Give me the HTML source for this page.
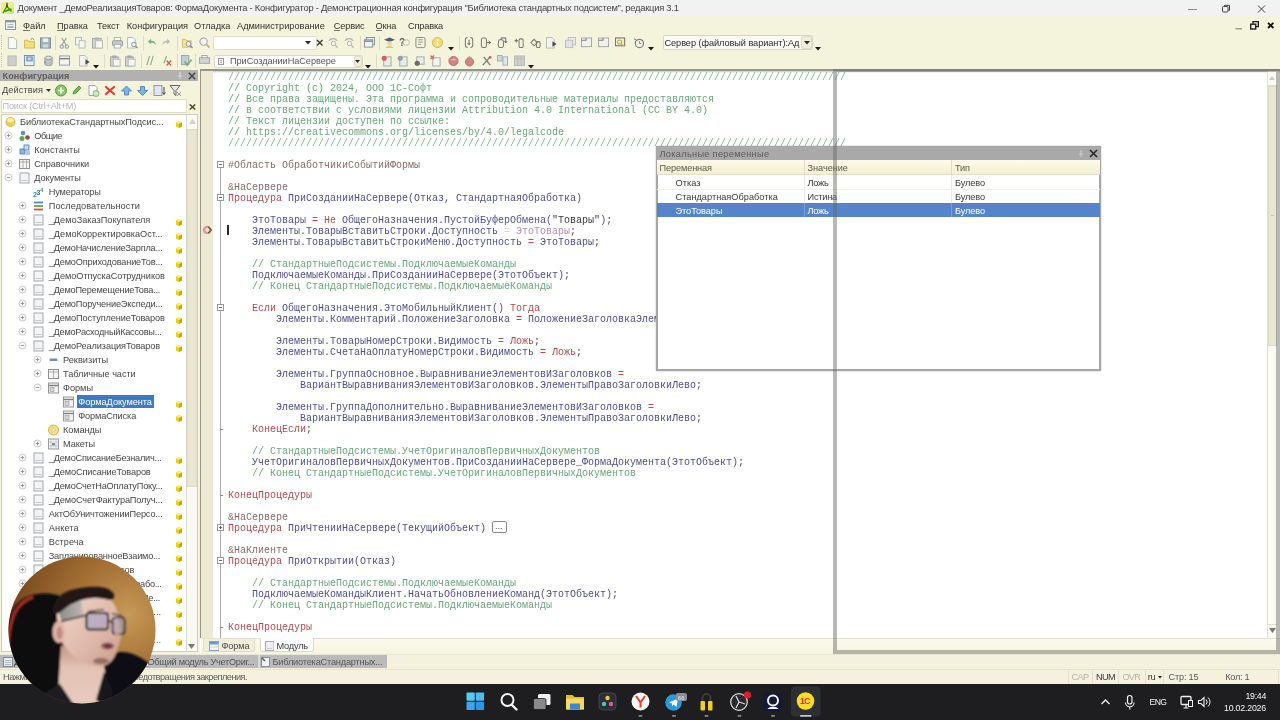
<!DOCTYPE html><html lang="ru"><head><meta charset="utf-8"><title>Конфигуратор</title><style>
*{box-sizing:border-box;margin:0;padding:0}
html,body{width:1280px;height:720px;overflow:hidden}
body{position:relative;background:#f4f3dc;font-family:"Liberation Sans",sans-serif;font-size:11px;color:#222}
.a{position:absolute}
.t{position:absolute;white-space:pre;line-height:14px;height:14px}
.code{position:absolute;left:228px;top:71.750px;font-family:"Liberation Mono",monospace;font-size:10px;line-height:11px;white-space:pre;color:#50508e}
.code i{font-style:normal}
.c{color:#6aa87a}.k{color:#b04c50}.p{color:#866e68}.s{color:#3a3a3a}.o{color:#c04a44}.q{color:#54485c}.c2{color:#86b892}
</style></head><body><div class="a" style="left:0;top:0;width:1280px;height:720px;will-change:transform;filter:blur(.4px)">
<div class="a" style="left:0px;top:0px;width:1280px;height:16px;background:linear-gradient(#f0f3f3,#f4f1f1)"></div>
<svg class="a" style="left:1px;top:2.200px" width="13" height="12" viewBox="0 0 13 12"><defs><linearGradient id="apg" x1="0" y1="0" x2="1" y2="1"><stop offset="0" stop-color="#f8e88a"/><stop offset=".55" stop-color="#eaf08c"/><stop offset="1" stop-color="#b4ec84"/></linearGradient></defs><rect x="0" y="0" width="13" height="12" rx="1.500" fill="url(#apg)"/><path d="M6 .8v4" stroke="#4a3a1a" stroke-width="1.300"/><path d="M6 4L2 11.200M6 4.500L10.500 9.500" stroke="#4a9a1e" stroke-width="1.500" fill="none"/><path d="M3.500 9.500L10.500 7" stroke="#3e8e1c" stroke-width="1.600"/><circle cx="6" cy="4.200" r="1.100" fill="#3a4a1a"/></svg>
<span class="t" style="left:17.5px;top:1.1999999999999993px;font-size:9.4px;letter-spacing:-0.253px;color:#454545">Документ _ДемоРеализацияТоваров: ФормаДокумента - Конфигуратор - Демонстрационная конфигурация &quot;Библиотека стандартных подсистем&quot;, редакция 3.1</span>
<svg class="a" style="left:1185px;top:4px" width="90" height="10" viewBox="0 0 90 10"><path d="M3 5.500h9" stroke="#8a8a8a" stroke-width="1"/><rect x="37.500" y="2.500" width="5.500" height="5.500" rx="1" fill="none" stroke="#444" stroke-width="1"/><path d="M39.500 2.500v-1.200h5v5h-1.200" fill="none" stroke="#444" stroke-width="1"/><path d="M73 1.500l7 7M80 1.500l-7 7" stroke="#444" stroke-width="1"/></svg>
<svg class="a" style="left:5px;top:20px" width="11" height="10" viewBox="0 0 11 10"><rect x=".5" y=".5" width="10" height="9" fill="#eef2f4" stroke="#8e989e" stroke-width="1"/><rect x=".5" y=".5" width="10" height="1.800" fill="#8a949c"/><path d="M2.500 4.500h6" stroke="#b4bcc2" stroke-width="1"/><rect x="2.500" y="6" width="6" height="2" fill="#a8b2ba"/></svg>
<span class="t" style="left:23px;top:18.5px;font-size:9.2px;letter-spacing:0.033px;color:#333">Файл</span>
<div class="a" style="left:23px;top:30px;width:6.5px;height:1px;background:#7a7a6a"></div>
<span class="t" style="left:57px;top:18.5px;font-size:9.2px;letter-spacing:-0.013px;color:#333">Правка</span>
<div class="a" style="left:57px;top:30px;width:6.5px;height:1px;background:#7a7a6a"></div>
<span class="t" style="left:97px;top:18.5px;font-size:9.2px;letter-spacing:-0.132px;color:#333">Текст</span>
<span class="t" style="left:126.75px;top:18.5px;font-size:9.2px;letter-spacing:-0.041px;color:#333">Конфигурация</span>
<span class="t" style="left:194px;top:18.5px;font-size:9.2px;letter-spacing:0.019px;color:#333">Отладка</span>
<span class="t" style="left:237px;top:18.5px;font-size:9.2px;letter-spacing:0.016px;color:#333">Администрирование</span>
<span class="t" style="left:333.75px;top:18.5px;font-size:9.2px;letter-spacing:-0.126px;color:#333">Сервис</span>
<div class="a" style="left:333.75px;top:30px;width:6.5px;height:1px;background:#7a7a6a"></div>
<span class="t" style="left:375.5px;top:18.5px;font-size:9.2px;letter-spacing:-0.157px;color:#333">Окна</span>
<div class="a" style="left:375.5px;top:30px;width:6.5px;height:1px;background:#7a7a6a"></div>
<span class="t" style="left:408px;top:18.5px;font-size:9.2px;letter-spacing:-0.156px;color:#333">Справка</span>
<svg class="a" style="left:1232px;top:19px" width="46" height="13" viewBox="0 0 46 13"><path d="M3.500 9.800h6.500" stroke="#8a8a80" stroke-width="1.200"/><rect x="18.700" y="5.200" width="5" height="4.800" fill="none" stroke="#222" stroke-width="1.400"/><path d="M21 4.800v-2.200h5.300v5h-2.400" fill="none" stroke="#222" stroke-width="1.400"/><path d="M36 3.800l5.400 5.200M41.400 3.800l-5.400 5.200" stroke="#111" stroke-width="1.800"/></svg>
<div class="a" style="left:1px;top:35px;width:2px;height:14px;border-left:1px dotted #c4c2ae"></div>
<div class="a" style="left:1px;top:53px;width:2px;height:14px;border-left:1px dotted #c4c2ae"></div>
<svg class="a" style="left:6.5px;top:36.5px;opacity:.8" width="11" height="12" viewBox="0 0 12 13"><path d="M1.500 .5h6l3 3v9h-9z" fill="#fcfcfc" stroke="#9aa4b0" stroke-width="1"/></svg>
<svg class="a" style="left:23.5px;top:36.5px;opacity:.8" width="11" height="12" viewBox="0 0 12 13"><path d="M.5 3.500h4l1 1.500h6v7h-11z" fill="#f4d86a" stroke="#c8a63a" stroke-width="1"/><path d="M7 3.500l2-2.500 2 2.500" fill="none" stroke="#5a9a3a" stroke-width="1"/></svg>
<svg class="a" style="left:40.0px;top:36.5px;opacity:.8" width="11" height="12" viewBox="0 0 12 13"><rect x=".5" y="1" width="11" height="11" fill="#8aa0b8" stroke="#5a708a" stroke-width="1"/><rect x="3" y="1.500" width="6" height="4" fill="#e8eef4"/><rect x="3" y="8" width="6" height="3.500" fill="#c8d2dc"/></svg>
<svg class="a" style="left:59.0px;top:36.5px;opacity:.8" width="11" height="12" viewBox="0 0 12 13"><path d="M3 1l5 8M8 1l-5 8" stroke="#7a8694" stroke-width="1.200"/><circle cx="3" cy="10.500" r="1.800" fill="none" stroke="#7a8694" stroke-width="1.100"/><circle cx="8.500" cy="10.500" r="1.800" fill="none" stroke="#7a8694" stroke-width="1.100"/></svg>
<svg class="a" style="left:75.0px;top:36.5px;opacity:.8" width="11" height="12" viewBox="0 0 12 13"><rect x=".5" y=".5" width="6.500" height="8" fill="#f4f4f4" stroke="#a0a8b0" stroke-width="1"/><rect x="4.500" y="4" width="6.500" height="8" fill="#f8f8f8" stroke="#a0a8b0" stroke-width="1"/></svg>
<svg class="a" style="left:91.5px;top:36.5px;opacity:.8" width="11" height="12" viewBox="0 0 12 13"><rect x=".5" y="1.500" width="9.500" height="10.500" fill="#c8ccd2" stroke="#8a929c" stroke-width="1"/><rect x="4" y="4" width="7.500" height="8" fill="#fafafa" stroke="#a0a8b0" stroke-width="1"/><rect x="3" y=".5" width="4.500" height="2.500" fill="#9aa2ac"/></svg>
<svg class="a" style="left:111.5px;top:36.5px;opacity:.8" width="11" height="12" viewBox="0 0 12 13"><rect x="2.500" y=".5" width="7" height="4" fill="#fafafa" stroke="#9aa2ac" stroke-width="1"/><rect x=".5" y="4" width="11" height="5.500" rx="1" fill="#b8bec6" stroke="#7a848e" stroke-width="1"/><rect x="2.500" y="8" width="7" height="4" fill="#fafafa" stroke="#9aa2ac" stroke-width="1"/></svg>
<svg class="a" style="left:126.5px;top:36.5px;opacity:.8" width="11" height="12" viewBox="0 0 12 13"><path d="M.5 .5h6l2.500 2.500v9h-8.500z" fill="#fcfcfc" stroke="#9aa4b0" stroke-width="1"/><circle cx="7.500" cy="8" r="2.500" fill="#e4eef8" stroke="#6a7a8a" stroke-width="1"/><path d="M9.500 10l2 2" stroke="#6a7a8a" stroke-width="1.400"/></svg>
<svg class="a" style="left:147.0px;top:36.5px;opacity:.8" width="11" height="12" viewBox="0 0 12 13"><path d="M1 5l3.500-3v2c3 0 5 1.500 5 5-1.500-2.500-3-3-5-3v2z" fill="#5a9a5a"/></svg>
<svg class="a" style="left:162.0px;top:36.5px;opacity:.8" width="11" height="12" viewBox="0 0 12 13"><path d="M9 5l-3.500-3v2c-3 0-5 1.500-5 5 1.500-2.500 3-3 5-3v2z" fill="#a8aeb4"/></svg>
<svg class="a" style="left:181.5px;top:36.5px;opacity:.8" width="11" height="12" viewBox="0 0 12 13"><path d="M.5 2.500h3.500l1 1.500h5v7h-9.500z" fill="#f4e08a" stroke="#c8aa4a" stroke-width="1"/><circle cx="7" cy="7.500" r="2.600" fill="#eef4fa" stroke="#6a7684" stroke-width="1"/><path d="M9 9.500l2.500 2.500" stroke="#6a7684" stroke-width="1.500"/></svg>
<svg class="a" style="left:199.0px;top:36.5px;opacity:.8" width="11" height="12" viewBox="0 0 12 13"><circle cx="5" cy="5" r="4" fill="#f4f6f8" stroke="#8a949e" stroke-width="1.200"/><path d="M8 8l3.500 3.500" stroke="#c8a04a" stroke-width="1.800"/></svg>
<svg class="a" style="left:327.5px;top:36.5px;opacity:.8" width="11" height="12" viewBox="0 0 12 13"><path d="M1 4c2-3 7-3 9 0" fill="none" stroke="#9aa2ac" stroke-width="1.200"/><circle cx="6" cy="7" r="2.500" fill="#f4f4f4" stroke="#9aa2ac" stroke-width="1"/><path d="M8 9l2.500 2.500" stroke="#9aa2ac" stroke-width="1.300"/></svg>
<svg class="a" style="left:344.0px;top:36.5px;opacity:.8" width="11" height="12" viewBox="0 0 12 13"><path d="M1 4c2-3 7-3 9 0" fill="none" stroke="#9aa2ac" stroke-width="1.200"/><circle cx="6" cy="7" r="2.500" fill="#f4f4f4" stroke="#9aa2ac" stroke-width="1"/><path d="M8 9l2.500 2.500" stroke="#9aa2ac" stroke-width="1.300"/></svg>
<svg class="a" style="left:363.5px;top:36.5px;opacity:.8" width="11" height="12" viewBox="0 0 12 13"><rect x="2.500" y=".5" width="9" height="8" fill="#e8ecf2" stroke="#6a7684" stroke-width="1"/><rect x=".5" y="3" width="9" height="8" fill="#f4f6f8" stroke="#6a7684" stroke-width="1"/><path d="M.5 4.500h9" stroke="#4a6a9a" stroke-width="1.500"/></svg>
<svg class="a" style="left:383.5px;top:36.5px;opacity:.8" width="11" height="12" viewBox="0 0 12 13"><path d="M0 3l6-2.500 6 2.500-6 2.500z" fill="#2a3a5a"/><circle cx="6" cy="7" r="2.500" fill="#f0c8a0"/><path d="M2 12c0-3 8-3 8 0z" fill="#e8b83a"/></svg>
<svg class="a" style="left:398.5px;top:36.5px;opacity:.8" width="11" height="12" viewBox="0 0 12 13"><text x="0" y="10" font-family="Liberation Sans" font-weight="bold" font-size="11" fill="#3a3a3a">?</text><ellipse cx="8" cy="6" rx="3.500" ry="3" fill="#f4f4e8" stroke="#9a9a8a" stroke-width=".8"/></svg>
<svg class="a" style="left:414.5px;top:36.5px;opacity:.8" width="11" height="12" viewBox="0 0 12 13"><rect x="1" y=".5" width="10" height="11" rx="1.500" fill="#f4f2e4" stroke="#6a6a5a" stroke-width="1"/><path d="M3.500 3h5M3.500 5.500h5M3.500 8h3" stroke="#7a7a6a" stroke-width="1"/></svg>
<svg class="a" style="left:431.5px;top:36.5px;opacity:.8" width="11" height="12" viewBox="0 0 12 13"><circle cx="6" cy="6" r="5.500" fill="#f4d25a" stroke="#c8a030" stroke-width="1"/><circle cx="6" cy="3.200" r="1" fill="#fff"/><rect x="5.200" y="5" width="1.600" height="4.500" fill="#fff"/></svg>
<svg class="a" style="left:464.0px;top:36.5px;opacity:.8" width="11" height="12" viewBox="0 0 12 13"><path d="M4 .5c-2 0-2.500 1-2.500 2.500v6c0 1.500.5 2.500 2.500 2.500M7 .5c2 0 2.500 1 2.500 2.500v6c0 1.500-.5 2.500-2.500 2.500" fill="none" stroke="#5a5a5a" stroke-width="1.100"/><path d="M5.500 3v5M4 6.500l1.500 2 1.500-2" fill="none" stroke="#3a3a3a" stroke-width="1"/></svg>
<svg class="a" style="left:480.0px;top:36.5px;opacity:.8" width="11" height="12" viewBox="0 0 12 13"><rect x="1.500" y="1" width="5.500" height="10.500" rx="2" fill="none" stroke="#5a5a5a" stroke-width="1.100"/><path d="M7.500 6h4M9.500 4l2 2-2 2" fill="none" stroke="#3a3a3a" stroke-width="1"/></svg>
<svg class="a" style="left:496.5px;top:36.5px;opacity:.8" width="11" height="12" viewBox="0 0 12 13"><rect x="1.500" y="3" width="5.500" height="8.500" rx="2" fill="none" stroke="#5a5a5a" stroke-width="1.100"/><path d="M4.500 3v-2h5v5M8 4.500l1.500 2 1.500-2" fill="none" stroke="#3a3a3a" stroke-width="1"/></svg>
<svg class="a" style="left:513.5px;top:36.5px;opacity:.8" width="11" height="12" viewBox="0 0 12 13"><rect x="5.500" y="2" width="4.500" height="9.500" rx="1.500" fill="none" stroke="#5a5a5a" stroke-width="1.100"/><path d="M.5 4h4M2.500 2v4" stroke="#3a3a3a" stroke-width="1"/></svg>
<svg class="a" style="left:529.5px;top:36.5px;opacity:.8" width="11" height="12" viewBox="0 0 12 13"><path d="M1 6l3.500-3.500 3.500 3.500-3.500 3.500z" fill="none" stroke="#5a5a5a" stroke-width="1.100"/><rect x="7" y="5" width="4" height="6.500" rx="1.500" fill="none" stroke="#5a5a5a" stroke-width="1.100"/></svg>
<svg class="a" style="left:546.0px;top:36.5px;opacity:.8" width="11" height="12" viewBox="0 0 12 13"><path d="M.5 .5h6l2.500 2.500v9h-8.500z" fill="#f4f4f4" stroke="#a0a8b0" stroke-width="1"/><path d="M7 4.500l4.500 3-4.500 3z" fill="#222"/></svg>
<svg class="a" style="left:564.5px;top:36.5px;opacity:.8" width="11" height="12" viewBox="0 0 12 13"><rect x="3.500" y=".5" width="8" height="8" fill="#e8eaee" stroke="#a8b0b8" stroke-width="1"/><rect x=".5" y="3.500" width="8" height="8" fill="#dcdfe4" stroke="#a8b0b8" stroke-width="1"/></svg>
<svg class="a" style="left:581.0px;top:36.5px;opacity:.8" width="11" height="12" viewBox="0 0 12 13"><rect x=".5" y="1" width="11" height="9.500" fill="#f0f2f4" stroke="#8a929c" stroke-width="1"/><path d="M.5 3.500h5v-2.500" fill="none" stroke="#5a646e" stroke-width="1.200"/></svg>
<svg class="a" style="left:598.0px;top:36.5px;opacity:.8" width="11" height="12" viewBox="0 0 12 13"><rect x=".5" y="1" width="11" height="9.500" fill="#f0f2f4" stroke="#8a929c" stroke-width="1"/><path d="M.5 3.500h5v-2.500" fill="none" stroke="#5a646e" stroke-width="1.200"/></svg>
<svg class="a" style="left:614.5px;top:36.5px;opacity:.8" width="11" height="12" viewBox="0 0 12 13"><rect x=".5" y="1" width="10" height="8.500" fill="#ecece4" stroke="#5a5a4a" stroke-width="1.200"/><circle cx="5" cy="5.500" r="2.200" fill="none" stroke="#c8a43a" stroke-width="1.400"/><path d="M6.500 7l4 3.500" stroke="#c8a43a" stroke-width="1.600"/></svg>
<svg class="a" style="left:632.5px;top:36.5px;opacity:.8" width="11" height="12" viewBox="0 0 12 13"><circle cx="7" cy="7" r="4.500" fill="none" stroke="#5a646e" stroke-width="1.300"/><path d="M7 4.500v2.500h2" stroke="#5a646e" stroke-width="1" fill="none"/><path d="M1 2l2.500 1" stroke="#5a646e" stroke-width="1"/></svg>
<div class="a" style="left:55px;top:35.5px;width:1px;height:14px;background:#dcdac6"></div>
<div class="a" style="left:106.5px;top:35.5px;width:1px;height:14px;background:#dcdac6"></div>
<div class="a" style="left:143px;top:35.5px;width:1px;height:14px;background:#dcdac6"></div>
<div class="a" style="left:176.5px;top:35.5px;width:1px;height:14px;background:#dcdac6"></div>
<div class="a" style="left:359.5px;top:35.5px;width:1px;height:14px;background:#dcdac6"></div>
<div class="a" style="left:379px;top:35.5px;width:1px;height:14px;background:#dcdac6"></div>
<div class="a" style="left:458.5px;top:35.5px;width:1px;height:14px;background:#dcdac6"></div>
<svg class="a" style="left:448px;top:46.5px" width="6" height="4" viewBox="0 0 6 4"><path d="M0 0h6L3 3.500z" fill="#1a1a1a"/></svg>
<svg class="a" style="left:648px;top:46.5px" width="6" height="4" viewBox="0 0 6 4"><path d="M0 0h6L3 3.500z" fill="#1a1a1a"/></svg>
<svg class="a" style="left:814.5px;top:46.5px" width="6" height="4" viewBox="0 0 6 4"><path d="M0 0h6L3 3.500z" fill="#1a1a1a"/></svg>
<div class="a" style="left:212.5px;top:35.5px;width:104px;height:14px;background:#fff;border:1px solid #e0deca;border-radius:2px"></div>
<svg class="a" style="left:305px;top:41px" width="6" height="4" viewBox="0 0 6 4"><path d="M0 0h6L3 3.500z" fill="#2a2a2a"/></svg>
<svg class="a" style="left:315.5px;top:39px" width="8" height="8" viewBox="0 0 8 8"><path d="M1 1l5.500 5.500M6.500 1l-5.500 5.500" stroke="#3a3a3a" stroke-width="1.400"/></svg>
<div class="a" style="left:662.5px;top:35px;width:150px;height:14.5px;background:#fbfbf6;border:1px solid #d8d6c2;border-radius:2px"></div>
<span class="t" style="left:664.5px;top:35.5px;font-size:9.2px;letter-spacing:-0.065px;color:#2a2a2a">Сервер (файловый вариант):Ад</span>
<div class="a" style="left:801px;top:36px;width:10.5px;height:12.5px;background:#f0eed8;border:1px solid #dedcc8;border-radius:2px"></div>
<svg class="a" style="left:803.5px;top:41px" width="6" height="4" viewBox="0 0 6 4"><path d="M0 0h6L3 3.500z" fill="#2a2a2a"/></svg>
<svg class="a" style="left:6.5px;top:54.5px;opacity:.8" width="11" height="12" viewBox="0 0 12 13"><rect x="1" y="1" width="9" height="10.500" fill="#c4c6c8" stroke="#a8aaac" stroke-width="1"/></svg>
<svg class="a" style="left:24.0px;top:54.5px;opacity:.8" width="11" height="12" viewBox="0 0 12 13"><rect x=".5" y=".5" width="10.500" height="11" fill="#e4eef8" stroke="#4a7ab0" stroke-width="1"/><rect x="3" y="2" width="6" height="4.500" fill="#7aa4d0" stroke="#3a6aa0" stroke-width=".8"/><path d="M4.500 3l3 2.500M7.500 3l-3 2.500" stroke="#fff" stroke-width=".8"/></svg>
<svg class="a" style="left:42.5px;top:54.5px;opacity:.8" width="11" height="12" viewBox="0 0 12 13"><path d="M2 3v7c0 2 8 2 8 0v-7" fill="#b0b8c0" stroke="#7a848e" stroke-width="1"/><ellipse cx="6" cy="3" rx="4" ry="1.800" fill="#d4dae0" stroke="#7a848e" stroke-width="1"/><path d="M.5 8l3-2v4z" fill="#8a949e"/></svg>
<svg class="a" style="left:59.0px;top:54.5px;opacity:.8" width="11" height="12" viewBox="0 0 12 13"><rect x=".5" y="1" width="11" height="10" fill="#f4f4f4" stroke="#7a848e" stroke-width="1"/><path d="M.5 4h11" stroke="#5a646e" stroke-width="1.500"/></svg>
<svg class="a" style="left:78.5px;top:54.5px;opacity:.8" width="11" height="12" viewBox="0 0 12 13"><path d="M.5 .5h6l2.500 2.500v9h-8.500z" fill="#f4f4f4" stroke="#a0a8b0" stroke-width="1"/><path d="M7 4.500l4.500 3-4.500 3z" fill="#222"/></svg>
<svg class="a" style="left:109.5px;top:54.5px;opacity:.8" width="11" height="12" viewBox="0 0 12 13"><rect x=".5" y="2" width="8.500" height="10" fill="#c8ccd2" stroke="#8a929c" stroke-width="1"/><rect x="3.500" y="4.500" width="7.500" height="7.500" fill="#f8f8f8" stroke="#a0a8b0" stroke-width="1"/><rect x="2.500" y=".5" width="4.500" height="2.500" fill="#8a929c"/></svg>
<svg class="a" style="left:125.0px;top:54.5px;opacity:.8" width="11" height="12" viewBox="0 0 12 13"><rect x=".5" y="2" width="8.500" height="10" fill="#c8ccd2" stroke="#8a929c" stroke-width="1"/><rect x="3.500" y="4.500" width="7.500" height="7.500" fill="#f8f8f8" stroke="#a0a8b0" stroke-width="1"/><rect x="2.500" y=".5" width="4.500" height="2.500" fill="#8a929c"/></svg>
<svg class="a" style="left:144.5px;top:54.5px;opacity:.8" width="11" height="12" viewBox="0 0 12 13"><path d="M2 11l3-10M6 11l3-10" stroke="#6aa06a" stroke-width="1.200"/></svg>
<svg class="a" style="left:162.0px;top:54.5px;opacity:.8" width="11" height="12" viewBox="0 0 12 13"><path d="M2 9l3-8" stroke="#6aa06a" stroke-width="1.200"/><path d="M5 6l5 5.500M10 6l-5 5.500" stroke="#c83a3a" stroke-width="1.500"/></svg>
<svg class="a" style="left:180.5px;top:54.5px;opacity:.8" width="11" height="12" viewBox="0 0 12 13"><rect x=".5" y=".5" width="8" height="10" fill="#b0c6d4" stroke="#7a94a8" stroke-width="1"/><path d="M4 7l2.500 4 5-6" fill="none" stroke="#5a9a4a" stroke-width="1.800"/></svg>
<svg class="a" style="left:199.0px;top:54.5px;opacity:.8" width="11" height="12" viewBox="0 0 12 13"><rect x=".5" y="3" width="11" height="6" fill="#c8ccd0" stroke="#8a9098" stroke-width="1"/><path d="M3 3v-2.500h6v2.500" fill="none" stroke="#8a9098" stroke-width="1"/></svg>
<svg class="a" style="left:381.0px;top:54.5px;opacity:.8" width="11" height="12" viewBox="0 0 12 13"><rect x="3" y="2" width="8" height="10" fill="#e8eaec" stroke="#8a929c" stroke-width="1"/><circle cx="3.500" cy="3.500" r="2.800" fill="#c83a3a"/></svg>
<svg class="a" style="left:396.5px;top:54.5px;opacity:.8" width="11" height="12" viewBox="0 0 12 13"><rect x="3" y="2" width="8" height="10" fill="#e8eaec" stroke="#8a929c" stroke-width="1"/><circle cx="3.500" cy="3.500" r="2.800" fill="#7a8a9a"/></svg>
<svg class="a" style="left:414.0px;top:54.5px;opacity:.8" width="11" height="12" viewBox="0 0 12 13"><rect x="3" y="2" width="8" height="8" fill="#e8eaec" stroke="#8a929c" stroke-width="1"/><circle cx="3.500" cy="9" r="2.800" fill="#4a4a4a"/></svg>
<svg class="a" style="left:430.0px;top:54.5px;opacity:.8" width="11" height="12" viewBox="0 0 12 13"><rect x="3" y="3" width="8" height="9" fill="#f4f4f4" stroke="#8a929c" stroke-width="1"/><path d="M.5 .5l4 4M4.500 .5l-4 4" stroke="#c83a3a" stroke-width="1.400"/></svg>
<svg class="a" style="left:447.5px;top:54.5px;opacity:.8" width="11" height="12" viewBox="0 0 12 13"><circle cx="6" cy="6.500" r="5" fill="#c86a6a" stroke="#a84a4a" stroke-width="1"/><path d="M3.500 5h5" stroke="#e8b0b0" stroke-width="1.200"/></svg>
<svg class="a" style="left:464.0px;top:54.5px;opacity:.8" width="11" height="12" viewBox="0 0 12 13"><circle cx="6" cy="7.500" r="4.500" fill="#c86a6a" stroke="#a84a4a" stroke-width="1"/><path d="M3.500 3.500l2.500-2 2.500 2" fill="#d89090" stroke="#b86060" stroke-width=".8"/></svg>
<svg class="a" style="left:481.0px;top:54.5px;opacity:.8" width="11" height="12" viewBox="0 0 12 13"><path d="M2 11l8-9M3 2l7 9" stroke="#5a6a5e" stroke-width="1.600"/><circle cx="10" cy="2.500" r="1.500" fill="#c83a3a"/></svg>
<svg class="a" style="left:496.5px;top:54.5px;opacity:.8" width="11" height="12" viewBox="0 0 12 13"><rect x=".5" y=".5" width="5" height="6" fill="#c8d4e0" stroke="#8a98a8" stroke-width="1"/><rect x="6.500" y="2" width="5" height="9" fill="#dce4ec" stroke="#8a98a8" stroke-width="1"/></svg>
<svg class="a" style="left:514.0px;top:54.5px;opacity:.8" width="11" height="12" viewBox="0 0 12 13"><rect x=".5" y="1" width="11" height="10.500" fill="#c4c6c8" stroke="#a8aaac" stroke-width="1"/><path d="M.5 4h11M4 1v10.500M8 1v10.500" stroke="#acaeb0" stroke-width="1"/></svg>
<div class="a" style="left:103.5px;top:53.5px;width:1px;height:14px;background:#dcdac6"></div>
<div class="a" style="left:140.5px;top:53.5px;width:1px;height:14px;background:#dcdac6"></div>
<div class="a" style="left:176.5px;top:53.5px;width:1px;height:14px;background:#dcdac6"></div>
<div class="a" style="left:195px;top:53.5px;width:1px;height:14px;background:#dcdac6"></div>
<div class="a" style="left:375.5px;top:53.5px;width:1px;height:14px;background:#dcdac6"></div>
<svg class="a" style="left:93px;top:64.5px" width="6" height="4" viewBox="0 0 6 4"><path d="M0 0h6L3 3.500z" fill="#1a1a1a"/></svg>
<svg class="a" style="left:365px;top:64.5px" width="6" height="4" viewBox="0 0 6 4"><path d="M0 0h6L3 3.500z" fill="#1a1a1a"/></svg>
<svg class="a" style="left:528px;top:64.5px" width="6" height="4" viewBox="0 0 6 4"><path d="M0 0h6L3 3.500z" fill="#1a1a1a"/></svg>
<div class="a" style="left:213.5px;top:54.5px;width:149px;height:13.5px;background:#fff;border:1px solid #dcdac6;border-radius:2px"></div>
<svg class="a" style="left:217.5px;top:57.5px" width="6" height="7" viewBox="0 0 6 7"><rect x=".5" y=".5" width="5" height="6" fill="#f4f4f4" stroke="#9a9a9a" stroke-width="1"/><path d="M2 2.500h2M2 4.500h2" stroke="#c88" stroke-width=".8"/></svg>
<span class="t" style="left:230px;top:54px;font-size:9.2px;letter-spacing:-0.058px;color:#585858">ПриСозданииНаСервере</span>
<div class="a" style="left:353.5px;top:55.5px;width:8.5px;height:11.5px;background:#f0eed8;border:1px solid #dedcc8;border-radius:2px"></div>
<svg class="a" style="left:355px;top:60px" width="5" height="4" viewBox="0 0 5 4"><path d="M0 0h5L2.500 3z" fill="#2a2a2a"/></svg>
<div class="a" style="left:200px;top:70px;width:1080px;height:584px;background:#fff"></div>
<div class="a" style="left:200px;top:68.8px;width:1080px;height:2.2px;background:#96968a"></div>
<div class="a" style="left:200px;top:71px;width:1080px;height:2px;background:linear-gradient(rgba(150,150,138,.55),rgba(150,150,138,0))"></div>
<div class="a" style="left:201px;top:71px;width:12px;height:567px;background:#ecead4"></div>
<div class="code"><i class="c2">///////////////////////////////////////////////////////////////////////////////////////////////////////</i>
<i class="c">// Copyright (c) 2024, ООО 1С-Софт</i>
<i class="c">// Все права защищены. Эта программа и сопроводительные материалы предоставляются</i>
<i class="c">// в соответствии с условиями лицензии Attribution 4.0 International (CC BY 4.0)</i>
<i class="c">// Текст лицензии доступен по ссылке:</i>
<i class="c">// https://creativecommons.org/licenses/by/4.0/legalcode</i>
<i class="c2">///////////////////////////////////////////////////////////////////////////////////////////////////////</i>

<i class="p">#Область ОбработчикиСобытийФормы</i>

<i class="p">&amp;НаСервере</i>
<i class="k">Процедура</i> ПриСозданииНаСервере(Отказ, СтандартнаяОбработка)

    ЭтоТовары <i class="o">=</i> <i class="k">Не</i> ОбщегоНазначения.ПустойБуферОбмена(<i class="s">"Товары"</i>)<i class="q">;</i>
    Элементы.ТоварыВставитьСтроки.Доступность <i style="color:#e6d2d2">=</i> <i style="color:#b88cb0">ЭтоТовары</i><i class="q">;</i>
    Элементы.ТоварыВставитьСтрокиМеню.Доступность <i class="o">=</i> ЭтоТовары<i class="q">;</i>

<i class="c">    // СтандартныеПодсистемы.ПодключаемыеКоманды</i>
    ПодключаемыеКоманды.ПриСозданииНаСервере(ЭтотОбъект)<i class="q">;</i>
<i class="c">    // Конец СтандартныеПодсистемы.ПодключаемыеКоманды</i>

    <i class="k">Если</i> ОбщегоНазначения.ЭтоМобильныйКлиент() <i class="k">Тогда</i>
        Элементы.Комментарий.ПоложениеЗаголовка <i class="o">=</i> ПоложениеЗаголовкаЭлементаФормы.Верх<i class="q">;</i>

        Элементы.ТоварыНомерСтроки.Видимость <i class="o">=</i> <i class="k">Ложь</i><i class="q">;</i>
        Элементы.СчетаНаОплатуНомерСтроки.Видимость <i class="o">=</i> <i class="k">Ложь</i><i class="q">;</i>

        Элементы.ГруппаОсновное.ВыравниваниеЭлементовИЗаголовков <i class="o">=</i>
            ВариантВыравниванияЭлементовИЗаголовков.ЭлементыПравоЗаголовкиЛево<i class="q">;</i>

        Элементы.ГруппаДополнительно.ВыравниваниеЭлементовИЗаголовков <i class="o">=</i>
            ВариантВыравниванияЭлементовИЗаголовков.ЭлементыПравоЗаголовкиЛево<i class="q">;</i>
    <i class="k">КонецЕсли</i><i class="q">;</i>

<i class="c">    // СтандартныеПодсистемы.УчетОригиналовПервичныхДокументов</i>
    УчетОригиналовПервичныхДокументов.ПриСозданииНаСервере_ФормаДокумента(ЭтотОбъект)<i class="q">;</i>
<i class="c">    // Конец СтандартныеПодсистемы.УчетОригиналовПервичныхДокументов</i>

<i class="k">КонецПроцедуры</i>

<i class="p">&amp;НаСервере</i>
<i class="k">Процедура</i> ПриЧтенииНаСервере(ТекущийОбъект)

<i class="p">&amp;НаКлиенте</i>
<i class="k">Процедура</i> ПриОткрытии(Отказ)

<i class="c">    // СтандартныеПодсистемы.ПодключаемыеКоманды</i>
    ПодключаемыеКомандыКлиент.НачатьОбновлениеКоманд(ЭтотОбъект)<i class="q">;</i>
<i class="c">    // Конец СтандартныеПодсистемы.ПодключаемыеКоманды</i>

<i class="k">КонецПроцедуры</i></div>
<div class="a" style="left:219.9px;top:168px;width:1px;height:470px;background:#a8a8a8"></div>
<svg class="a" style="left:216.9px;top:161.0px" width="7" height="7" viewBox="0 0 7 7"><rect x=".5" y=".5" width="6" height="6" fill="#fff" stroke="#9a9a9a" stroke-width="1"/><path d="M2 3.500h3" stroke="#6a6a6a" stroke-width="1"/></svg>
<svg class="a" style="left:216.9px;top:194.0px" width="7" height="7" viewBox="0 0 7 7"><rect x=".5" y=".5" width="6" height="6" fill="#fff" stroke="#9a9a9a" stroke-width="1"/><path d="M2 3.500h3" stroke="#6a6a6a" stroke-width="1"/></svg>
<svg class="a" style="left:216.9px;top:304.0px" width="7" height="7" viewBox="0 0 7 7"><rect x=".5" y=".5" width="6" height="6" fill="#fff" stroke="#9a9a9a" stroke-width="1"/><path d="M2 3.500h3" stroke="#6a6a6a" stroke-width="1"/></svg>
<svg class="a" style="left:216.9px;top:557.0px" width="7" height="7" viewBox="0 0 7 7"><rect x=".5" y=".5" width="6" height="6" fill="#fff" stroke="#9a9a9a" stroke-width="1"/><path d="M2 3.500h3" stroke="#6a6a6a" stroke-width="1"/></svg>
<svg class="a" style="left:216.9px;top:524.0px" width="7" height="7" viewBox="0 0 7 7"><rect x=".5" y=".5" width="6" height="6" fill="#fff" stroke="#9a9a9a" stroke-width="1"/><path d="M2 3.500h3M3.500 2v3" stroke="#6a6a6a" stroke-width="1"/></svg>
<div class="a" style="left:220px;top:428.5px;width:3px;height:1px;background:#8a8a8a"></div>
<div class="a" style="left:220px;top:494.5px;width:3px;height:1px;background:#8a8a8a"></div>
<div class="a" style="left:220px;top:626.5px;width:3px;height:1px;background:#8a8a8a"></div>
<svg class="a" style="left:202.4px;top:225px" width="10" height="10" viewBox="0 0 10 10"><circle cx="5" cy="5" r="4.300" fill="#dc9c9c"/><circle cx="5.300" cy="5" r="2" fill="#fbe0da"/><path d="M6.300 1.800L9.300 5L6.300 8.200" stroke="#6e5436" stroke-width="1.400" fill="none"/></svg>
<div class="a" style="left:227.2px;top:224.5px;width:1.8px;height:10.5px;background:#2a2a2a"></div>
<div class="a" style="left:492px;top:521px;width:14.5px;height:12px;border:1px solid #8a8a8a;border-radius:2px;background:#fff"></div>
<span class="t" style="left:495px;top:519px;font-size:9.2px;letter-spacing:0.000px;color:#444;font-size:9px">...</span>
<div class="a" style="left:1266.5px;top:71px;width:10.5px;height:567px;background:#fbfbf3;border-left:1px solid #e2e0d0"></div>
<div class="a" style="left:1267.5px;top:85.5px;width:9.5px;height:260px;background:#e9e7d1;border:1px solid #dedcc6"></div>
<div class="a" style="left:1270.5px;top:214.5px;width:3px;height:1px;background:#c4c2ae"></div>
<div class="a" style="left:1267px;top:85px;width:10px;height:1px;background:#e0decd"></div>
<svg class="a" style="left:1269px;top:76px" width="6" height="4" viewBox="0 0 6 4"><path d="M0 4h6L3 0z" fill="#c8c8c8"/></svg>
<svg class="a" style="left:1269px;top:628px" width="7" height="5" viewBox="0 0 7 5"><path d="M0 0h7L3.500 5z" fill="#777"/></svg>
<div class="a" style="left:1267px;top:624px;width:10px;height:1px;background:#e0decd"></div>
<div class="a" style="left:201px;top:638px;width:1079px;height:18px;background:linear-gradient(#fbfbee,#f4f3dc)"></div>
<div class="a" style="left:201px;top:638px;width:1079px;height:1px;background:#e4e2d2"></div>
<div class="a" style="left:203px;top:639px;width:52px;height:13px;background:#f1efd9;border:1px solid #dedcc6;border-top:none;border-radius:0 0 3px 3px"></div>
<svg class="a" style="left:208.5px;top:640.5px" width="10.5" height="10" viewBox="0 0 10.5 10"><rect x=".5" y=".5" width="9.500" height="9" fill="#f4f8fc" stroke="#8aa0b8" stroke-width="1"/><rect x="1" y="1" width="8.500" height="2.500" fill="#6a9ad0"/><path d="M1 6h8.500" stroke="#c8d4e0" stroke-width="1"/></svg>
<span class="t" style="left:221.5px;top:639px;font-size:9.2px;letter-spacing:-0.134px;color:#4a4a4a">Форма</span>
<div class="a" style="left:259.5px;top:638px;width:54px;height:14px;background:#fff;border:1px solid #dcdac8;border-top:none;border-radius:0 0 3px 3px"></div>
<svg class="a" style="left:264.5px;top:640.5px" width="9.5" height="10" viewBox="0 0 9.5 10"><rect x=".5" y=".5" width="8.500" height="9" fill="#eef0f2" stroke="#a8aeb4" stroke-width="1"/><path d="M2 7.500h5" stroke="#c8ccd0" stroke-width="1"/></svg>
<span class="t" style="left:276.5px;top:639px;font-size:9.2px;letter-spacing:-0.185px;color:#3a3a3a">Модуль</span>
<div class="a" style="left:655.5px;top:145.5px;width:445.5px;height:225px;background:#fff;border:2px solid #a6a6a6;box-shadow:0 0 1.500px rgba(0,0,0,.3)"></div>
<div class="a" style="left:657px;top:147px;width:442.5px;height:13px;background:#a9a9a9"></div>
<span class="t" style="left:659.5px;top:146.5px;font-size:9.2px;letter-spacing:0.315px;color:#5c5c5c">Локальные переменные</span>
<svg class="a" style="left:1088.5px;top:149px" width="9" height="9" viewBox="0 0 9 9"><path d="M1 1l7 7M8 1l-7 7" stroke="#2a2a2a" stroke-width="1.700"/></svg>
<svg class="a" style="left:1079px;top:150px" width="4" height="7" viewBox="0 0 4 7"><path d="M2 0v7M0 4h4" stroke="#d0d0d0" stroke-width="1"/></svg>
<div class="a" style="left:657px;top:160px;width:442.5px;height:15px;background:linear-gradient(#fdfbea,#f3efd2);border-bottom:1px solid #e4e0c4"></div>
<div class="a" style="left:804px;top:160px;width:1px;height:15px;background:#e0dcc0"></div>
<div class="a" style="left:804px;top:175px;width:1px;height:42px;background:#ecebe0"></div>
<div class="a" style="left:951px;top:160px;width:1px;height:15px;background:#e0dcc0"></div>
<div class="a" style="left:951px;top:175px;width:1px;height:42px;background:#ecebe0"></div>
<span class="t" style="left:659.5px;top:161px;font-size:9.2px;letter-spacing:-0.116px;color:#5a5a4a">Переменная</span>
<span class="t" style="left:807.5px;top:161px;font-size:9.2px;letter-spacing:-0.037px;color:#5a5a4a">Значение</span>
<span class="t" style="left:955px;top:161px;font-size:9.2px;letter-spacing:-0.112px;color:#5a5a4a">Тип</span>
<div class="a" style="left:657px;top:189px;width:442.5px;height:1px;background:#f1f0e6"></div>
<div class="a" style="left:657px;top:203px;width:442.5px;height:14px;background:#5485ca"></div>
<span class="t" style="left:675.5px;top:176px;font-size:9.2px;letter-spacing:0.034px;color:#3a3a3a">Отказ</span>
<span class="t" style="left:807.5px;top:176px;font-size:9.2px;letter-spacing:-0.250px;color:#3a3a3a">Ложь</span>
<span class="t" style="left:955px;top:176px;font-size:9.2px;letter-spacing:-0.103px;color:#3a3a3a">Булево</span>
<span class="t" style="left:675.5px;top:190px;font-size:9.2px;letter-spacing:0.018px;color:#3a3a3a">СтандартнаяОбработка</span>
<span class="t" style="left:807.5px;top:190px;font-size:9.2px;letter-spacing:-0.211px;color:#3a3a3a">Истина</span>
<span class="t" style="left:955px;top:190px;font-size:9.2px;letter-spacing:-0.103px;color:#3a3a3a">Булево</span>
<span class="t" style="left:675.5px;top:204px;font-size:9.2px;letter-spacing:-0.054px;color:#fff">ЭтоТовары</span>
<span class="t" style="left:807.5px;top:204px;font-size:9.2px;letter-spacing:-0.250px;color:#fff">Ложь</span>
<span class="t" style="left:955px;top:204px;font-size:9.2px;letter-spacing:-0.103px;color:#fff">Булево</span>
<div class="a" style="left:804px;top:203px;width:1px;height:14px;background:#769fd8"></div>
<div class="a" style="left:951px;top:203px;width:1px;height:14px;background:#769fd8"></div>
<div class="a" style="left:833px;top:69px;width:443px;height:3px;background:rgba(105,105,105,.47)"></div>
<div class="a" style="left:833px;top:72px;width:4px;height:581.5px;background:rgba(105,105,105,.47)"></div>
<div class="a" style="left:1276px;top:69px;width:4px;height:584.5px;background:rgba(105,105,105,.47)"></div>
<div class="a" style="left:837px;top:650px;width:439px;height:3.5px;background:rgba(105,105,105,.47)"></div>
<div class="a" style="left:0px;top:70px;width:198px;height:11px;background:#b1b1b1"></div>
<span class="t" style="left:2.5px;top:68.5px;font-size:9.2px;letter-spacing:0.022px;font-weight:bold;color:#606060">Конфигурация</span>
<svg class="a" style="left:187.500px;top:71.500px" width="8" height="8" viewBox="0 0 8 8"><path d="M.8 .8L7.200 7.200M7.200 .8L.8 7.200" stroke="#484848" stroke-width="1.600" fill="none"/></svg>
<svg class="a" style="left:177px;top:72px" width="6" height="7" viewBox="0 0 6 7"><path d="M3 0v7M1 4h4" stroke="#ddd" stroke-width="1"/></svg>
<span class="t" style="left:2px;top:83px;font-size:9.2px;letter-spacing:0.086px;color:#4a4a4a">Действия</span>
<svg class="a" style="left:46px;top:89px" width="5" height="3"><path d="M0 0h5L2.5 3z" fill="#333"/></svg>
<svg class="a" style="left:54px;top:83px" width="140" height="15" viewBox="0 0 140 15"><circle cx="7" cy="7.5" r="5.5" fill="#8cc46a" stroke="#5a9a3a" stroke-width="1"/><path d="M4 7.5h6M7 4.5v6" stroke="#fff" stroke-width="1.6"/><path d="M19 11l1-3 5-5 2 2-5 5z" fill="#6fbf4f" stroke="#3d8a2a" stroke-width=".8"/><path d="M35 2.5h6l2 2v8h-8z" fill="#fdfdfd" stroke="#9aa5ad" stroke-width="1"/><circle cx="42" cy="10.5" r="3" fill="#cfe6c0" stroke="#79a860" stroke-width=".8"/><path d="M52 4l8 7M60 4l-8 7" stroke="#d9413a" stroke-width="2.2" stroke-linecap="round"/><path d="M72.500 3l5 5h-3v4h-4v-4h-3z" fill="#79b6e8" stroke="#3f86c8" stroke-width=".9"/><path d="M88.500 12.500l5-5h-3v-4h-4v4h-3z" fill="#79b6e8" stroke="#3f86c8" stroke-width=".9"/><rect x="100" y="2.500" width="8" height="10" fill="#dfe6ee" stroke="#8c99a8" stroke-width="1"/><path d="M110 4v7M108.500 9.500l1.500 2 1.500-2" stroke="#444" stroke-width="1" fill="none"/><path d="M116 2.500h10l-4 5v5l-2-1.500v-3.500z" fill="#e8e8e8" stroke="#666" stroke-width="1"/><path d="M123 9l4 4M127 9l-4 4" stroke="#999" stroke-width="1"/></svg>
<div class="a" style="left:1px;top:99px;width:185.5px;height:14px;background:#fff;border:1px solid #dedcca"></div>
<span class="t" style="left:2.5px;top:98.5px;font-size:9.2px;letter-spacing:-0.216px;color:#b8b8b8">Поиск (Ctrl+Alt+M)</span>
<svg class="a" style="left:188.500px;top:103.500px" width="7" height="6" viewBox="0 0 7 6"><path d="M.8 .5L6.200 5.500M6.200 .5L.8 5.500" stroke="#4a4a22" stroke-width="1.500" fill="none"/></svg>
<div class="a" style="left:1px;top:114px;width:197px;height:538px;background:#fff;border:1px solid #d0ceba"></div>
<div class="a" style="left:185.5px;top:115px;width:11.5px;height:536px;background:#fbfaf2;border-left:1px solid #dddbc8"></div>
<div class="a" style="left:186.5px;top:128.5px;width:10.5px;height:358px;background:#e9e7d1;border:1px solid #dedcc6"></div>
<svg class="a" style="left:188.500px;top:119px" width="7" height="5"><path d="M0 5h7L3.500 0z" fill="#d0d0cc"/></svg>
<svg class="a" style="left:188px;top:644px" width="7" height="5"><path d="M0 0h7L3.5 5z" fill="#777"/></svg>
<svg class="a" style="left:4.5px;top:115.75px" width="11" height="12" viewBox="0 0 11 12"><circle cx="5.500" cy="6" r="4.600" fill="#ecd04a" stroke="#c8a83a" stroke-width=".7"/><ellipse cx="5.500" cy="4.200" rx="3.300" ry="2" fill="#fbf0b0"/></svg>
<span class="t" style="left:20px;top:114.75px;font-size:9.2px;letter-spacing:-0.068px;color:#484848">БиблиотекаСтандартныхПодсис...</span>
<svg class="a" style="left:175px;top:119.75px" width="8" height="9" viewBox="0 0 8 9"><path d="M1 2.500l3-1.500 3 1.500v4l-3 1.500-3-1.500z" fill="#e8cf1e"/><path d="M1 2.500l3 1.500 3-1.500-3-1.500z" fill="#f8ec7a"/><path d="M4 4v4l3-1.500v-4z" fill="#c8a80a"/></svg>
<svg class="a" style="left:4.25px;top:131.25px" width="9" height="9" viewBox="0 0 9 9"><circle cx="4.500" cy="4.500" r="3.500" fill="#fdfdfd" stroke="#c4c4c4" stroke-width=".9"/><path d="M2.700 4.500h3.600M4.500 2.700v3.600" stroke="#8e8e8e" stroke-width=".9"/></svg>
<svg class="a" style="left:18.5px;top:129.75px" width="11" height="12" viewBox="0 0 11 12"><circle cx="4" cy="3" r="2.300" fill="#5a8fd0"/><circle cx="3" cy="8.500" r="2.500" fill="#5aa84a"/><circle cx="8.500" cy="7.500" r="2.300" fill="#8e4e3e"/></svg>
<span class="t" style="left:34.25px;top:128.75px;font-size:9.2px;letter-spacing:-0.500px;color:#484848">Общие</span>
<svg class="a" style="left:4.25px;top:145.25px" width="9" height="9" viewBox="0 0 9 9"><circle cx="4.500" cy="4.500" r="3.500" fill="#fdfdfd" stroke="#c4c4c4" stroke-width=".9"/><path d="M2.700 4.500h3.600M4.500 2.700v3.600" stroke="#8e8e8e" stroke-width=".9"/></svg>
<svg class="a" style="left:18.5px;top:143.75px" width="11" height="12" viewBox="0 0 11 12"><rect x="1" y="5" width="5" height="5" fill="#8fb4e0" stroke="#4a78b4" stroke-width=".8"/><rect x="5" y="1" width="5" height="5" fill="#c4d8f0" stroke="#4a78b4" stroke-width=".8"/><path d="M7 8h4M7 10h4" stroke="#6a8ab4" stroke-width="1"/></svg>
<span class="t" style="left:34.25px;top:142.75px;font-size:9.2px;letter-spacing:0.051px;color:#484848">Константы</span>
<svg class="a" style="left:4.25px;top:159.25px" width="9" height="9" viewBox="0 0 9 9"><circle cx="4.500" cy="4.500" r="3.500" fill="#fdfdfd" stroke="#c4c4c4" stroke-width=".9"/><path d="M2.700 4.500h3.600M4.500 2.700v3.600" stroke="#8e8e8e" stroke-width=".9"/></svg>
<svg class="a" style="left:18.5px;top:157.75px" width="11" height="12" viewBox="0 0 11 12"><rect x=".5" y="1.500" width="10" height="9" fill="#f4f4f4" stroke="#909090" stroke-width="1"/><path d="M4 1.500v9M7.500 1.500v9M.5 4h10" stroke="#a0a0a0" stroke-width=".8"/></svg>
<span class="t" style="left:34.25px;top:156.75px;font-size:9.2px;letter-spacing:-0.067px;color:#484848">Справочники</span>
<svg class="a" style="left:4.25px;top:173.25px" width="9" height="9" viewBox="0 0 9 9"><circle cx="4.500" cy="4.500" r="3.500" fill="#fdfdfd" stroke="#c4c4c4" stroke-width=".9"/><path d="M2.700 4.500h3.600" stroke="#8e8e8e" stroke-width=".9"/></svg>
<svg class="a" style="left:18.5px;top:171.75px" width="11" height="12" viewBox="0 0 11 12"><rect x="1" y="1" width="9" height="10" fill="#f2f4f6" stroke="#a4a9ae" stroke-width="1"/><path d="M2.500 8.500h6" stroke="#c4c8cc" stroke-width="1"/></svg>
<span class="t" style="left:34.25px;top:170.75px;font-size:9.2px;letter-spacing:-0.103px;color:#484848">Документы</span>
<svg class="a" style="left:33px;top:185.75px" width="11" height="12" viewBox="0 0 11 12"><text x="0" y="11" font-size="7" font-family="Liberation Sans" fill="#3a78c0" font-weight="bold">2</text><text x="3.500" y="8.500" font-size="7" font-family="Liberation Sans" fill="#3a78c0" font-weight="bold">3</text><text x="7" y="6" font-size="6" font-family="Liberation Sans" fill="#4a9a4a" font-weight="bold">4</text></svg>
<span class="t" style="left:48.75px;top:184.75px;font-size:9.2px;letter-spacing:-0.157px;color:#484848">Нумераторы</span>
<svg class="a" style="left:18.25px;top:201.25px" width="9" height="9" viewBox="0 0 9 9"><circle cx="4.500" cy="4.500" r="3.500" fill="#fdfdfd" stroke="#c4c4c4" stroke-width=".9"/><path d="M2.700 4.500h3.600M4.500 2.700v3.600" stroke="#8e8e8e" stroke-width=".9"/></svg>
<svg class="a" style="left:33px;top:199.75px" width="11" height="12" viewBox="0 0 11 12"><path d="M1 2.500h9" stroke="#4a8ad0" stroke-width="1.800"/><path d="M1 6h9" stroke="#5aaa4a" stroke-width="1.800"/><path d="M1 9.500h9" stroke="#d8503a" stroke-width="1.800"/></svg>
<span class="t" style="left:48.75px;top:198.75px;font-size:9.2px;letter-spacing:0.068px;color:#484848">Последовательности</span>
<svg class="a" style="left:18.25px;top:215.25px" width="9" height="9" viewBox="0 0 9 9"><circle cx="4.500" cy="4.500" r="3.500" fill="#fdfdfd" stroke="#c4c4c4" stroke-width=".9"/><path d="M2.700 4.500h3.600M4.500 2.700v3.600" stroke="#8e8e8e" stroke-width=".9"/></svg>
<svg class="a" style="left:33px;top:213.75px" width="11" height="12" viewBox="0 0 11 12"><rect x="1" y="1" width="9" height="10" fill="#f2f4f6" stroke="#a4a9ae" stroke-width="1"/><path d="M2.500 8.500h6" stroke="#c4c8cc" stroke-width="1"/></svg>
<span class="t" style="left:48.75px;top:212.75px;font-size:9.2px;letter-spacing:0.004px;color:#484848">_ДемоЗаказПокупателя</span>
<svg class="a" style="left:175px;top:217.75px" width="8" height="9" viewBox="0 0 8 9"><path d="M1 2.500l3-1.500 3 1.500v4l-3 1.500-3-1.500z" fill="#e8cf1e"/><path d="M1 2.500l3 1.500 3-1.500-3-1.500z" fill="#f8ec7a"/><path d="M4 4v4l3-1.500v-4z" fill="#c8a80a"/></svg>
<svg class="a" style="left:18.25px;top:229.25px" width="9" height="9" viewBox="0 0 9 9"><circle cx="4.500" cy="4.500" r="3.500" fill="#fdfdfd" stroke="#c4c4c4" stroke-width=".9"/><path d="M2.700 4.500h3.600M4.500 2.700v3.600" stroke="#8e8e8e" stroke-width=".9"/></svg>
<svg class="a" style="left:33px;top:227.75px" width="11" height="12" viewBox="0 0 11 12"><rect x="1" y="1" width="9" height="10" fill="#f2f4f6" stroke="#a4a9ae" stroke-width="1"/><path d="M2.500 8.500h6" stroke="#c4c8cc" stroke-width="1"/></svg>
<span class="t" style="left:48.75px;top:226.75px;font-size:9.2px;letter-spacing:-0.012px;color:#484848">_ДемоКорректировкаОст...</span>
<svg class="a" style="left:175px;top:231.75px" width="8" height="9" viewBox="0 0 8 9"><path d="M1 2.500l3-1.500 3 1.500v4l-3 1.500-3-1.500z" fill="#e8cf1e"/><path d="M1 2.500l3 1.500 3-1.500-3-1.500z" fill="#f8ec7a"/><path d="M4 4v4l3-1.500v-4z" fill="#c8a80a"/></svg>
<svg class="a" style="left:18.25px;top:243.25px" width="9" height="9" viewBox="0 0 9 9"><circle cx="4.500" cy="4.500" r="3.500" fill="#fdfdfd" stroke="#c4c4c4" stroke-width=".9"/><path d="M2.700 4.500h3.600M4.500 2.700v3.600" stroke="#8e8e8e" stroke-width=".9"/></svg>
<svg class="a" style="left:33px;top:241.75px" width="11" height="12" viewBox="0 0 11 12"><rect x="1" y="1" width="9" height="10" fill="#f2f4f6" stroke="#a4a9ae" stroke-width="1"/><path d="M2.500 8.500h6" stroke="#c4c8cc" stroke-width="1"/></svg>
<span class="t" style="left:48.75px;top:240.75px;font-size:9.2px;letter-spacing:-0.198px;color:#484848">_ДемоНачислениеЗарпла...</span>
<svg class="a" style="left:175px;top:245.75px" width="8" height="9" viewBox="0 0 8 9"><path d="M1 2.500l3-1.500 3 1.500v4l-3 1.500-3-1.500z" fill="#e8cf1e"/><path d="M1 2.500l3 1.500 3-1.500-3-1.500z" fill="#f8ec7a"/><path d="M4 4v4l3-1.500v-4z" fill="#c8a80a"/></svg>
<svg class="a" style="left:18.25px;top:257.25px" width="9" height="9" viewBox="0 0 9 9"><circle cx="4.500" cy="4.500" r="3.500" fill="#fdfdfd" stroke="#c4c4c4" stroke-width=".9"/><path d="M2.700 4.500h3.600M4.500 2.700v3.600" stroke="#8e8e8e" stroke-width=".9"/></svg>
<svg class="a" style="left:33px;top:255.75px" width="11" height="12" viewBox="0 0 11 12"><rect x="1" y="1" width="9" height="10" fill="#f2f4f6" stroke="#a4a9ae" stroke-width="1"/><path d="M2.500 8.500h6" stroke="#c4c8cc" stroke-width="1"/></svg>
<span class="t" style="left:48.75px;top:254.75px;font-size:9.2px;letter-spacing:-0.167px;color:#484848">_ДемоОприходованиеТов...</span>
<svg class="a" style="left:175px;top:259.75px" width="8" height="9" viewBox="0 0 8 9"><path d="M1 2.500l3-1.500 3 1.500v4l-3 1.500-3-1.500z" fill="#e8cf1e"/><path d="M1 2.500l3 1.500 3-1.500-3-1.500z" fill="#f8ec7a"/><path d="M4 4v4l3-1.500v-4z" fill="#c8a80a"/></svg>
<svg class="a" style="left:18.25px;top:271.25px" width="9" height="9" viewBox="0 0 9 9"><circle cx="4.500" cy="4.500" r="3.500" fill="#fdfdfd" stroke="#c4c4c4" stroke-width=".9"/><path d="M2.700 4.500h3.600M4.500 2.700v3.600" stroke="#8e8e8e" stroke-width=".9"/></svg>
<svg class="a" style="left:33px;top:269.75px" width="11" height="12" viewBox="0 0 11 12"><rect x="1" y="1" width="9" height="10" fill="#f2f4f6" stroke="#a4a9ae" stroke-width="1"/><path d="M2.500 8.500h6" stroke="#c4c8cc" stroke-width="1"/></svg>
<span class="t" style="left:48.75px;top:268.75px;font-size:9.2px;letter-spacing:-0.054px;color:#484848">_ДемоОтпускаСотрудников</span>
<svg class="a" style="left:175px;top:273.75px" width="8" height="9" viewBox="0 0 8 9"><path d="M1 2.500l3-1.500 3 1.500v4l-3 1.500-3-1.500z" fill="#e8cf1e"/><path d="M1 2.500l3 1.500 3-1.500-3-1.500z" fill="#f8ec7a"/><path d="M4 4v4l3-1.500v-4z" fill="#c8a80a"/></svg>
<svg class="a" style="left:18.25px;top:285.25px" width="9" height="9" viewBox="0 0 9 9"><circle cx="4.500" cy="4.500" r="3.500" fill="#fdfdfd" stroke="#c4c4c4" stroke-width=".9"/><path d="M2.700 4.500h3.600M4.500 2.700v3.600" stroke="#8e8e8e" stroke-width=".9"/></svg>
<svg class="a" style="left:33px;top:283.75px" width="11" height="12" viewBox="0 0 11 12"><rect x="1" y="1" width="9" height="10" fill="#f2f4f6" stroke="#a4a9ae" stroke-width="1"/><path d="M2.500 8.500h6" stroke="#c4c8cc" stroke-width="1"/></svg>
<span class="t" style="left:48.75px;top:282.75px;font-size:9.2px;letter-spacing:-0.231px;color:#484848">_ДемоПеремещениеТова...</span>
<svg class="a" style="left:175px;top:287.75px" width="8" height="9" viewBox="0 0 8 9"><path d="M1 2.500l3-1.500 3 1.500v4l-3 1.500-3-1.500z" fill="#e8cf1e"/><path d="M1 2.500l3 1.500 3-1.500-3-1.500z" fill="#f8ec7a"/><path d="M4 4v4l3-1.500v-4z" fill="#c8a80a"/></svg>
<svg class="a" style="left:18.25px;top:299.25px" width="9" height="9" viewBox="0 0 9 9"><circle cx="4.500" cy="4.500" r="3.500" fill="#fdfdfd" stroke="#c4c4c4" stroke-width=".9"/><path d="M2.700 4.500h3.600M4.500 2.700v3.600" stroke="#8e8e8e" stroke-width=".9"/></svg>
<svg class="a" style="left:33px;top:297.75px" width="11" height="12" viewBox="0 0 11 12"><rect x="1" y="1" width="9" height="10" fill="#f2f4f6" stroke="#a4a9ae" stroke-width="1"/><path d="M2.500 8.500h6" stroke="#c4c8cc" stroke-width="1"/></svg>
<span class="t" style="left:48.75px;top:296.75px;font-size:9.2px;letter-spacing:-0.163px;color:#484848">_ДемоПоручениеЭкспеди...</span>
<svg class="a" style="left:175px;top:301.75px" width="8" height="9" viewBox="0 0 8 9"><path d="M1 2.500l3-1.500 3 1.500v4l-3 1.500-3-1.500z" fill="#e8cf1e"/><path d="M1 2.500l3 1.500 3-1.500-3-1.500z" fill="#f8ec7a"/><path d="M4 4v4l3-1.500v-4z" fill="#c8a80a"/></svg>
<svg class="a" style="left:18.25px;top:313.25px" width="9" height="9" viewBox="0 0 9 9"><circle cx="4.500" cy="4.500" r="3.500" fill="#fdfdfd" stroke="#c4c4c4" stroke-width=".9"/><path d="M2.700 4.500h3.600M4.500 2.700v3.600" stroke="#8e8e8e" stroke-width=".9"/></svg>
<svg class="a" style="left:33px;top:311.75px" width="11" height="12" viewBox="0 0 11 12"><rect x="1" y="1" width="9" height="10" fill="#f2f4f6" stroke="#a4a9ae" stroke-width="1"/><path d="M2.500 8.500h6" stroke="#c4c8cc" stroke-width="1"/></svg>
<span class="t" style="left:48.75px;top:310.75px;font-size:9.2px;letter-spacing:-0.119px;color:#484848">_ДемоПоступлениеТоваров</span>
<svg class="a" style="left:175px;top:315.75px" width="8" height="9" viewBox="0 0 8 9"><path d="M1 2.500l3-1.500 3 1.500v4l-3 1.500-3-1.500z" fill="#e8cf1e"/><path d="M1 2.500l3 1.500 3-1.500-3-1.500z" fill="#f8ec7a"/><path d="M4 4v4l3-1.500v-4z" fill="#c8a80a"/></svg>
<svg class="a" style="left:18.25px;top:327.25px" width="9" height="9" viewBox="0 0 9 9"><circle cx="4.500" cy="4.500" r="3.500" fill="#fdfdfd" stroke="#c4c4c4" stroke-width=".9"/><path d="M2.700 4.500h3.600M4.500 2.700v3.600" stroke="#8e8e8e" stroke-width=".9"/></svg>
<svg class="a" style="left:33px;top:325.75px" width="11" height="12" viewBox="0 0 11 12"><rect x="1" y="1" width="9" height="10" fill="#f2f4f6" stroke="#a4a9ae" stroke-width="1"/><path d="M2.500 8.500h6" stroke="#c4c8cc" stroke-width="1"/></svg>
<span class="t" style="left:48.75px;top:324.75px;font-size:9.2px;letter-spacing:-0.255px;color:#484848">_ДемоРасходныйКассовы...</span>
<svg class="a" style="left:175px;top:329.75px" width="8" height="9" viewBox="0 0 8 9"><path d="M1 2.500l3-1.500 3 1.500v4l-3 1.500-3-1.500z" fill="#e8cf1e"/><path d="M1 2.500l3 1.500 3-1.500-3-1.500z" fill="#f8ec7a"/><path d="M4 4v4l3-1.500v-4z" fill="#c8a80a"/></svg>
<svg class="a" style="left:18.25px;top:341.25px" width="9" height="9" viewBox="0 0 9 9"><circle cx="4.500" cy="4.500" r="3.500" fill="#fdfdfd" stroke="#c4c4c4" stroke-width=".9"/><path d="M2.700 4.500h3.600" stroke="#8e8e8e" stroke-width=".9"/></svg>
<svg class="a" style="left:33px;top:339.75px" width="11" height="12" viewBox="0 0 11 12"><rect x="1" y="1" width="9" height="10" fill="#f2f4f6" stroke="#a4a9ae" stroke-width="1"/><path d="M2.500 8.500h6" stroke="#c4c8cc" stroke-width="1"/></svg>
<span class="t" style="left:48.75px;top:338.75px;font-size:9.2px;letter-spacing:-0.120px;color:#484848">_ДемоРеализацияТоваров</span>
<svg class="a" style="left:175px;top:343.75px" width="8" height="9" viewBox="0 0 8 9"><path d="M1 2.500l3-1.500 3 1.500v4l-3 1.500-3-1.500z" fill="#e8cf1e"/><path d="M1 2.500l3 1.500 3-1.500-3-1.500z" fill="#f8ec7a"/><path d="M4 4v4l3-1.500v-4z" fill="#c8a80a"/></svg>
<svg class="a" style="left:32.9px;top:355.25px" width="9" height="9" viewBox="0 0 9 9"><circle cx="4.500" cy="4.500" r="3.500" fill="#fdfdfd" stroke="#c4c4c4" stroke-width=".9"/><path d="M2.700 4.500h3.600M4.500 2.700v3.600" stroke="#8e8e8e" stroke-width=".9"/></svg>
<svg class="a" style="left:48px;top:353.75px" width="11" height="12" viewBox="0 0 11 12"><rect x="1.500" y="4.500" width="8" height="2.600" rx="1.200" fill="#7a8fa8"/></svg>
<span class="t" style="left:63px;top:352.75px;font-size:9.2px;letter-spacing:0.018px;color:#484848">Реквизиты</span>
<svg class="a" style="left:32.9px;top:369.25px" width="9" height="9" viewBox="0 0 9 9"><circle cx="4.500" cy="4.500" r="3.500" fill="#fdfdfd" stroke="#c4c4c4" stroke-width=".9"/><path d="M2.700 4.500h3.600M4.500 2.700v3.600" stroke="#8e8e8e" stroke-width=".9"/></svg>
<svg class="a" style="left:48px;top:367.75px" width="11" height="12" viewBox="0 0 11 12"><rect x=".5" y="1.500" width="10" height="9" fill="#f4f4f4" stroke="#909090" stroke-width="1"/><path d="M5.500 1.500v9M.5 4h10" stroke="#a0a0a0" stroke-width=".8"/></svg>
<span class="t" style="left:63px;top:366.75px;font-size:9.2px;letter-spacing:-0.064px;color:#484848">Табличные части</span>
<svg class="a" style="left:32.9px;top:383.25px" width="9" height="9" viewBox="0 0 9 9"><circle cx="4.500" cy="4.500" r="3.500" fill="#fdfdfd" stroke="#c4c4c4" stroke-width=".9"/><path d="M2.700 4.500h3.600" stroke="#8e8e8e" stroke-width=".9"/></svg>
<svg class="a" style="left:48px;top:381.75px" width="11" height="12" viewBox="0 0 11 12"><rect x=".5" y="1" width="10" height="10" fill="#f2f2f2" stroke="#9a9a9a" stroke-width="1"/><path d="M.5 3.500h10" stroke="#80808c" stroke-width="1.400"/><rect x="2" y="5.500" width="4" height="4" fill="#d4d4d4" stroke="#999" stroke-width=".6"/></svg>
<span class="t" style="left:63px;top:380.75px;font-size:9.2px;letter-spacing:-0.033px;color:#484848">Формы</span>
<svg class="a" style="left:62.5px;top:395.75px" width="11" height="12" viewBox="0 0 11 12"><rect x=".5" y="1" width="10" height="10" fill="#f2f2f2" stroke="#9a9a9a" stroke-width="1"/><path d="M.5 3.500h10" stroke="#80808c" stroke-width="1.400"/><rect x="2" y="5.500" width="4" height="4" fill="#d4d4d4" stroke="#999" stroke-width=".6"/></svg>
<div class="a" style="left:76.75px;top:394.5px;width:77px;height:13.5px;background:#3c7ac4"></div>
<span class="t" style="left:78.25px;top:394.75px;font-size:9.2px;letter-spacing:-0.053px;color:#fff">ФормаДокумента</span>
<svg class="a" style="left:175px;top:399.75px" width="8" height="9" viewBox="0 0 8 9"><path d="M1 2.500l3-1.500 3 1.500v4l-3 1.500-3-1.500z" fill="#e8cf1e"/><path d="M1 2.500l3 1.500 3-1.500-3-1.500z" fill="#f8ec7a"/><path d="M4 4v4l3-1.500v-4z" fill="#c8a80a"/></svg>
<svg class="a" style="left:62.5px;top:409.75px" width="11" height="12" viewBox="0 0 11 12"><rect x=".5" y="1" width="10" height="10" fill="#f2f2f2" stroke="#9a9a9a" stroke-width="1"/><path d="M.5 3.500h10" stroke="#80808c" stroke-width="1.400"/><rect x="2" y="5.500" width="4" height="4" fill="#d4d4d4" stroke="#999" stroke-width=".6"/></svg>
<span class="t" style="left:78.25px;top:408.75px;font-size:9.2px;letter-spacing:-0.125px;color:#484848">ФормаСписка</span>
<svg class="a" style="left:175px;top:413.75px" width="8" height="9" viewBox="0 0 8 9"><path d="M1 2.500l3-1.500 3 1.500v4l-3 1.500-3-1.500z" fill="#e8cf1e"/><path d="M1 2.500l3 1.500 3-1.500-3-1.500z" fill="#f8ec7a"/><path d="M4 4v4l3-1.500v-4z" fill="#c8a80a"/></svg>
<svg class="a" style="left:48px;top:423.75px" width="11" height="12" viewBox="0 0 11 12"><circle cx="5.500" cy="6" r="5" fill="#f6e28a" stroke="#caa63a" stroke-width=".9"/><path d="M4 3.500l4 2.500-4 2.500z" fill="#fff8d8" stroke="#d8b84a" stroke-width=".6"/></svg>
<span class="t" style="left:63px;top:422.75px;font-size:9.2px;letter-spacing:-0.104px;color:#484848">Команды</span>
<svg class="a" style="left:32.9px;top:439.25px" width="9" height="9" viewBox="0 0 9 9"><circle cx="4.500" cy="4.500" r="3.500" fill="#fdfdfd" stroke="#c4c4c4" stroke-width=".9"/><path d="M2.700 4.500h3.600M4.500 2.700v3.600" stroke="#8e8e8e" stroke-width=".9"/></svg>
<svg class="a" style="left:48px;top:437.75px" width="11" height="12" viewBox="0 0 11 12"><rect x=".5" y="1" width="10" height="10" fill="#f4f4f6" stroke="#999" stroke-width="1"/><path d="M3 1v10M8 1v10M.5 4h10M.5 8h10" stroke="#b8bcc4" stroke-width=".7"/><rect x="4" y="5" width="3" height="2.500" fill="#7a90b0"/></svg>
<span class="t" style="left:63px;top:436.75px;font-size:9.2px;letter-spacing:-0.108px;color:#484848">Макеты</span>
<svg class="a" style="left:18.25px;top:453.25px" width="9" height="9" viewBox="0 0 9 9"><circle cx="4.500" cy="4.500" r="3.500" fill="#fdfdfd" stroke="#c4c4c4" stroke-width=".9"/><path d="M2.700 4.500h3.600M4.500 2.700v3.600" stroke="#8e8e8e" stroke-width=".9"/></svg>
<svg class="a" style="left:33px;top:451.75px" width="11" height="12" viewBox="0 0 11 12"><rect x="1" y="1" width="9" height="10" fill="#f2f4f6" stroke="#a4a9ae" stroke-width="1"/><path d="M2.500 8.500h6" stroke="#c4c8cc" stroke-width="1"/></svg>
<span class="t" style="left:48.75px;top:450.75px;font-size:9.2px;letter-spacing:-0.211px;color:#484848">_ДемоСписаниеБезналич...</span>
<svg class="a" style="left:175px;top:455.75px" width="8" height="9" viewBox="0 0 8 9"><path d="M1 2.500l3-1.500 3 1.500v4l-3 1.500-3-1.500z" fill="#e8cf1e"/><path d="M1 2.500l3 1.500 3-1.500-3-1.500z" fill="#f8ec7a"/><path d="M4 4v4l3-1.500v-4z" fill="#c8a80a"/></svg>
<svg class="a" style="left:18.25px;top:467.25px" width="9" height="9" viewBox="0 0 9 9"><circle cx="4.500" cy="4.500" r="3.500" fill="#fdfdfd" stroke="#c4c4c4" stroke-width=".9"/><path d="M2.700 4.500h3.600M4.500 2.700v3.600" stroke="#8e8e8e" stroke-width=".9"/></svg>
<svg class="a" style="left:33px;top:465.75px" width="11" height="12" viewBox="0 0 11 12"><rect x="1" y="1" width="9" height="10" fill="#f2f4f6" stroke="#a4a9ae" stroke-width="1"/><path d="M2.500 8.500h6" stroke="#c4c8cc" stroke-width="1"/></svg>
<span class="t" style="left:48.75px;top:464.75px;font-size:9.2px;letter-spacing:-0.138px;color:#484848">_ДемоСписаниеТоваров</span>
<svg class="a" style="left:175px;top:469.75px" width="8" height="9" viewBox="0 0 8 9"><path d="M1 2.500l3-1.500 3 1.500v4l-3 1.500-3-1.500z" fill="#e8cf1e"/><path d="M1 2.500l3 1.500 3-1.500-3-1.500z" fill="#f8ec7a"/><path d="M4 4v4l3-1.500v-4z" fill="#c8a80a"/></svg>
<svg class="a" style="left:18.25px;top:481.25px" width="9" height="9" viewBox="0 0 9 9"><circle cx="4.500" cy="4.500" r="3.500" fill="#fdfdfd" stroke="#c4c4c4" stroke-width=".9"/><path d="M2.700 4.500h3.600M4.500 2.700v3.600" stroke="#8e8e8e" stroke-width=".9"/></svg>
<svg class="a" style="left:33px;top:479.75px" width="11" height="12" viewBox="0 0 11 12"><rect x="1" y="1" width="9" height="10" fill="#f2f4f6" stroke="#a4a9ae" stroke-width="1"/><path d="M2.500 8.500h6" stroke="#c4c8cc" stroke-width="1"/></svg>
<span class="t" style="left:48.75px;top:478.75px;font-size:9.2px;letter-spacing:-0.190px;color:#484848">_ДемоСчетНаОплатуПоку...</span>
<svg class="a" style="left:175px;top:483.75px" width="8" height="9" viewBox="0 0 8 9"><path d="M1 2.500l3-1.500 3 1.500v4l-3 1.500-3-1.500z" fill="#e8cf1e"/><path d="M1 2.500l3 1.500 3-1.500-3-1.500z" fill="#f8ec7a"/><path d="M4 4v4l3-1.500v-4z" fill="#c8a80a"/></svg>
<svg class="a" style="left:18.25px;top:495.25px" width="9" height="9" viewBox="0 0 9 9"><circle cx="4.500" cy="4.500" r="3.500" fill="#fdfdfd" stroke="#c4c4c4" stroke-width=".9"/><path d="M2.700 4.500h3.600M4.500 2.700v3.600" stroke="#8e8e8e" stroke-width=".9"/></svg>
<svg class="a" style="left:33px;top:493.75px" width="11" height="12" viewBox="0 0 11 12"><rect x="1" y="1" width="9" height="10" fill="#f2f4f6" stroke="#a4a9ae" stroke-width="1"/><path d="M2.500 8.500h6" stroke="#c4c8cc" stroke-width="1"/></svg>
<span class="t" style="left:48.75px;top:492.75px;font-size:9.2px;letter-spacing:-0.146px;color:#484848">_ДемоСчетФактураПолуч...</span>
<svg class="a" style="left:175px;top:497.75px" width="8" height="9" viewBox="0 0 8 9"><path d="M1 2.500l3-1.500 3 1.500v4l-3 1.500-3-1.500z" fill="#e8cf1e"/><path d="M1 2.500l3 1.500 3-1.500-3-1.500z" fill="#f8ec7a"/><path d="M4 4v4l3-1.500v-4z" fill="#c8a80a"/></svg>
<svg class="a" style="left:18.25px;top:509.25px" width="9" height="9" viewBox="0 0 9 9"><circle cx="4.500" cy="4.500" r="3.500" fill="#fdfdfd" stroke="#c4c4c4" stroke-width=".9"/><path d="M2.700 4.500h3.600M4.500 2.700v3.600" stroke="#8e8e8e" stroke-width=".9"/></svg>
<svg class="a" style="left:33px;top:507.75px" width="11" height="12" viewBox="0 0 11 12"><rect x="1" y="1" width="9" height="10" fill="#f2f4f6" stroke="#a4a9ae" stroke-width="1"/><path d="M2.500 8.500h6" stroke="#c4c8cc" stroke-width="1"/></svg>
<span class="t" style="left:48.75px;top:506.75px;font-size:9.2px;letter-spacing:-0.143px;color:#484848">АктОбУничтоженииПерсо...</span>
<svg class="a" style="left:175px;top:511.75px" width="8" height="9" viewBox="0 0 8 9"><path d="M1 2.500l3-1.500 3 1.500v4l-3 1.500-3-1.500z" fill="#e8cf1e"/><path d="M1 2.500l3 1.500 3-1.500-3-1.500z" fill="#f8ec7a"/><path d="M4 4v4l3-1.500v-4z" fill="#c8a80a"/></svg>
<svg class="a" style="left:18.25px;top:523.25px" width="9" height="9" viewBox="0 0 9 9"><circle cx="4.500" cy="4.500" r="3.500" fill="#fdfdfd" stroke="#c4c4c4" stroke-width=".9"/><path d="M2.700 4.500h3.600M4.500 2.700v3.600" stroke="#8e8e8e" stroke-width=".9"/></svg>
<svg class="a" style="left:33px;top:521.75px" width="11" height="12" viewBox="0 0 11 12"><rect x="1" y="1" width="9" height="10" fill="#f2f4f6" stroke="#a4a9ae" stroke-width="1"/><path d="M2.500 8.500h6" stroke="#c4c8cc" stroke-width="1"/></svg>
<span class="t" style="left:48.75px;top:520.75px;font-size:9.2px;letter-spacing:0.103px;color:#484848">Анкета</span>
<svg class="a" style="left:175px;top:525.75px" width="8" height="9" viewBox="0 0 8 9"><path d="M1 2.500l3-1.500 3 1.500v4l-3 1.500-3-1.500z" fill="#e8cf1e"/><path d="M1 2.500l3 1.500 3-1.500-3-1.500z" fill="#f8ec7a"/><path d="M4 4v4l3-1.500v-4z" fill="#c8a80a"/></svg>
<svg class="a" style="left:18.25px;top:537.25px" width="9" height="9" viewBox="0 0 9 9"><circle cx="4.500" cy="4.500" r="3.500" fill="#fdfdfd" stroke="#c4c4c4" stroke-width=".9"/><path d="M2.700 4.500h3.600M4.500 2.700v3.600" stroke="#8e8e8e" stroke-width=".9"/></svg>
<svg class="a" style="left:33px;top:535.75px" width="11" height="12" viewBox="0 0 11 12"><rect x="1" y="1" width="9" height="10" fill="#f2f4f6" stroke="#a4a9ae" stroke-width="1"/><path d="M2.500 8.500h6" stroke="#c4c8cc" stroke-width="1"/></svg>
<span class="t" style="left:48.75px;top:534.75px;font-size:9.2px;letter-spacing:0.030px;color:#484848">Встреча</span>
<svg class="a" style="left:175px;top:539.75px" width="8" height="9" viewBox="0 0 8 9"><path d="M1 2.500l3-1.500 3 1.500v4l-3 1.500-3-1.500z" fill="#e8cf1e"/><path d="M1 2.500l3 1.500 3-1.500-3-1.500z" fill="#f8ec7a"/><path d="M4 4v4l3-1.500v-4z" fill="#c8a80a"/></svg>
<svg class="a" style="left:18.25px;top:551.25px" width="9" height="9" viewBox="0 0 9 9"><circle cx="4.500" cy="4.500" r="3.500" fill="#fdfdfd" stroke="#c4c4c4" stroke-width=".9"/><path d="M2.700 4.500h3.600M4.500 2.700v3.600" stroke="#8e8e8e" stroke-width=".9"/></svg>
<svg class="a" style="left:33px;top:549.75px" width="11" height="12" viewBox="0 0 11 12"><rect x="1" y="1" width="9" height="10" fill="#f2f4f6" stroke="#a4a9ae" stroke-width="1"/><path d="M2.500 8.500h6" stroke="#c4c8cc" stroke-width="1"/></svg>
<span class="t" style="left:48.75px;top:548.75px;font-size:9.2px;letter-spacing:-0.213px;color:#484848">ЗапланированноеВзаимо...</span>
<svg class="a" style="left:175px;top:553.75px" width="8" height="9" viewBox="0 0 8 9"><path d="M1 2.500l3-1.500 3 1.500v4l-3 1.500-3-1.500z" fill="#e8cf1e"/><path d="M1 2.500l3 1.500 3-1.500-3-1.500z" fill="#f8ec7a"/><path d="M4 4v4l3-1.500v-4z" fill="#c8a80a"/></svg>
<svg class="a" style="left:18.25px;top:565.25px" width="9" height="9" viewBox="0 0 9 9"><circle cx="4.500" cy="4.500" r="3.500" fill="#fdfdfd" stroke="#c4c4c4" stroke-width=".9"/><path d="M2.700 4.500h3.600M4.500 2.700v3.600" stroke="#8e8e8e" stroke-width=".9"/></svg>
<svg class="a" style="left:33px;top:563.75px" width="11" height="12" viewBox="0 0 11 12"><rect x="1" y="1" width="9" height="10" fill="#f2f4f6" stroke="#a4a9ae" stroke-width="1"/><path d="M2.500 8.500h6" stroke="#c4c8cc" stroke-width="1"/></svg>
<span class="t" style="left:48.75px;top:562.75px;font-size:9.2px;letter-spacing:-0.150px;color:#484848">НазначениеОпросов</span>
<svg class="a" style="left:175px;top:567.75px" width="8" height="9" viewBox="0 0 8 9"><path d="M1 2.500l3-1.500 3 1.500v4l-3 1.500-3-1.500z" fill="#e8cf1e"/><path d="M1 2.500l3 1.500 3-1.500-3-1.500z" fill="#f8ec7a"/><path d="M4 4v4l3-1.500v-4z" fill="#c8a80a"/></svg>
<svg class="a" style="left:18.25px;top:579.25px" width="9" height="9" viewBox="0 0 9 9"><circle cx="4.500" cy="4.500" r="3.500" fill="#fdfdfd" stroke="#c4c4c4" stroke-width=".9"/><path d="M2.700 4.500h3.600M4.500 2.700v3.600" stroke="#8e8e8e" stroke-width=".9"/></svg>
<svg class="a" style="left:33px;top:577.75px" width="11" height="12" viewBox="0 0 11 12"><rect x="1" y="1" width="9" height="10" fill="#f2f4f6" stroke="#a4a9ae" stroke-width="1"/><path d="M2.500 8.500h6" stroke="#c4c8cc" stroke-width="1"/></svg>
<span class="t" style="left:48.75px;top:576.75px;font-size:9.2px;letter-spacing:-0.278px;color:#484848">ОтзывСогласияНаОбрабо...</span>
<svg class="a" style="left:175px;top:581.75px" width="8" height="9" viewBox="0 0 8 9"><path d="M1 2.500l3-1.500 3 1.500v4l-3 1.500-3-1.500z" fill="#e8cf1e"/><path d="M1 2.500l3 1.500 3-1.500-3-1.500z" fill="#f8ec7a"/><path d="M4 4v4l3-1.500v-4z" fill="#c8a80a"/></svg>
<svg class="a" style="left:18.25px;top:593.25px" width="9" height="9" viewBox="0 0 9 9"><circle cx="4.500" cy="4.500" r="3.500" fill="#fdfdfd" stroke="#c4c4c4" stroke-width=".9"/><path d="M2.700 4.500h3.600M4.500 2.700v3.600" stroke="#8e8e8e" stroke-width=".9"/></svg>
<svg class="a" style="left:33px;top:591.75px" width="11" height="12" viewBox="0 0 11 12"><rect x="1" y="1" width="9" height="10" fill="#f2f4f6" stroke="#a4a9ae" stroke-width="1"/><path d="M2.500 8.500h6" stroke="#c4c8cc" stroke-width="1"/></svg>
<span class="t" style="left:48.75px;top:590.75px;font-size:9.2px;letter-spacing:-0.237px;color:#484848">СогласиеНаОбработкуПе...</span>
<svg class="a" style="left:175px;top:595.75px" width="8" height="9" viewBox="0 0 8 9"><path d="M1 2.500l3-1.500 3 1.500v4l-3 1.500-3-1.500z" fill="#e8cf1e"/><path d="M1 2.500l3 1.500 3-1.500-3-1.500z" fill="#f8ec7a"/><path d="M4 4v4l3-1.500v-4z" fill="#c8a80a"/></svg>
<svg class="a" style="left:18.25px;top:607.25px" width="9" height="9" viewBox="0 0 9 9"><circle cx="4.500" cy="4.500" r="3.500" fill="#fdfdfd" stroke="#c4c4c4" stroke-width=".9"/><path d="M2.700 4.500h3.600M4.500 2.700v3.600" stroke="#8e8e8e" stroke-width=".9"/></svg>
<svg class="a" style="left:33px;top:605.75px" width="11" height="12" viewBox="0 0 11 12"><rect x="1" y="1" width="9" height="10" fill="#f2f4f6" stroke="#a4a9ae" stroke-width="1"/><path d="M2.500 8.500h6" stroke="#c4c8cc" stroke-width="1"/></svg>
<span class="t" style="left:48.75px;top:604.75px;font-size:9.2px;letter-spacing:0.036px;color:#484848">ЭлектронноеПисьмоВхо...</span>
<svg class="a" style="left:175px;top:609.75px" width="8" height="9" viewBox="0 0 8 9"><path d="M1 2.500l3-1.500 3 1.500v4l-3 1.500-3-1.500z" fill="#e8cf1e"/><path d="M1 2.500l3 1.500 3-1.500-3-1.500z" fill="#f8ec7a"/><path d="M4 4v4l3-1.500v-4z" fill="#c8a80a"/></svg>
<svg class="a" style="left:18.25px;top:621.25px" width="9" height="9" viewBox="0 0 9 9"><circle cx="4.500" cy="4.500" r="3.500" fill="#fdfdfd" stroke="#c4c4c4" stroke-width=".9"/><path d="M2.700 4.500h3.600M4.500 2.700v3.600" stroke="#8e8e8e" stroke-width=".9"/></svg>
<svg class="a" style="left:33px;top:619.75px" width="11" height="12" viewBox="0 0 11 12"><rect x="1" y="1" width="9" height="10" fill="#f2f4f6" stroke="#a4a9ae" stroke-width="1"/><path d="M2.500 8.500h6" stroke="#c4c8cc" stroke-width="1"/></svg>
<span class="t" style="left:48.75px;top:618.75px;font-size:9.2px;letter-spacing:0.208px;color:#484848">ТелефонныйЗвонок</span>
<svg class="a" style="left:175px;top:623.75px" width="8" height="9" viewBox="0 0 8 9"><path d="M1 2.500l3-1.500 3 1.500v4l-3 1.500-3-1.500z" fill="#e8cf1e"/><path d="M1 2.500l3 1.500 3-1.500-3-1.500z" fill="#f8ec7a"/><path d="M4 4v4l3-1.500v-4z" fill="#c8a80a"/></svg>
<svg class="a" style="left:18.25px;top:635.25px" width="9" height="9" viewBox="0 0 9 9"><circle cx="4.500" cy="4.500" r="3.500" fill="#fdfdfd" stroke="#c4c4c4" stroke-width=".9"/><path d="M2.700 4.500h3.600M4.500 2.700v3.600" stroke="#8e8e8e" stroke-width=".9"/></svg>
<svg class="a" style="left:33px;top:633.75px" width="11" height="12" viewBox="0 0 11 12"><rect x="1" y="1" width="9" height="10" fill="#f2f4f6" stroke="#a4a9ae" stroke-width="1"/><path d="M2.500 8.500h6" stroke="#c4c8cc" stroke-width="1"/></svg>
<span class="t" style="left:48.75px;top:632.75px;font-size:9.2px;letter-spacing:0.029px;color:#484848">ЭлектронноеПисьмоИсх...</span>
<svg class="a" style="left:175px;top:637.75px" width="8" height="9" viewBox="0 0 8 9"><path d="M1 2.500l3-1.500 3 1.500v4l-3 1.500-3-1.500z" fill="#e8cf1e"/><path d="M1 2.500l3 1.500 3-1.500-3-1.500z" fill="#f8ec7a"/><path d="M4 4v4l3-1.500v-4z" fill="#c8a80a"/></svg>
<div class="a" style="left:198px;top:70px;width:2px;height:584px;background:#f4f3dc"></div>
<div class="a" style="left:199.7px;top:70px;width:1.5px;height:568px;background:#97957e"></div>
<div class="a" style="left:0px;top:654px;width:1280px;height:15px;background:#f4f2dc"></div>
<div class="a" style="left:0px;top:669px;width:1280px;height:15px;background:#f4f2dc"></div>
<div class="a" style="left:0px;top:654.5px;width:387px;height:13.5px;background:#bababa"></div>
<div class="a" style="left:0px;top:654px;width:1280px;height:1px;background:#e8e6d4"></div>
<div class="a" style="left:136px;top:654.5px;width:2px;height:13.5px;background:#dcdbd0"></div>
<div class="a" style="left:258px;top:654.5px;width:2px;height:13.5px;background:#dcdbd0"></div>
<svg class="a" style="left:3px;top:656.5px" width="10" height="10" viewBox="0 0 10 10"><rect x=".5" y=".5" width="9" height="9" fill="#e8eef4" stroke="#7a8a9a" stroke-width="1"/><path d="M2 3.500h6M2 5.500h6M2 7.500h6" stroke="#9aaaba" stroke-width=".8"/></svg>
<span class="t" style="left:14px;top:654.5px;font-size:9.2px;letter-spacing:0.364px;color:#4a4a4a">Документ _ДемоРеализ...</span>
<svg class="a" style="left:140px;top:656.5px" width="9" height="10" viewBox="0 0 9 10"><rect x=".5" y=".5" width="8" height="9" fill="#eef0f2" stroke="#9aa0a8" stroke-width="1"/></svg>
<span class="t" style="left:147.5px;top:654.5px;font-size:9.2px;letter-spacing:-0.272px;color:#555">Общий модуль УчетОриг...</span>
<svg class="a" style="left:261px;top:656.5px" width="9" height="10" viewBox="0 0 9 10"><rect x=".5" y=".5" width="8" height="9" fill="#eef0f2" stroke="#8a9098" stroke-width="1"/><path d="M1 1l3 3" stroke="#5a5a5a" stroke-width="1.500"/></svg>
<span class="t" style="left:272.5px;top:654.5px;font-size:9.2px;letter-spacing:-0.190px;color:#5a5a5a">БиблиотекаСтандартных...</span>
<div class="a" style="left:0px;top:669px;width:1280px;height:1px;background:#e6e4d0"></div>
<span class="t" style="left:3px;top:669.75px;font-size:9.2px;letter-spacing:-0.505px;color:#5a5a5a">Нажмите и удерживайте Ctrl для предотвращения закрепления.</span>
<div class="a" style="left:1068px;top:670px;width:1px;height:14px;background:#e4e2cf"></div>
<div class="a" style="left:1092px;top:670px;width:1px;height:14px;background:#e4e2cf"></div>
<div class="a" style="left:1118px;top:670px;width:1px;height:14px;background:#e4e2cf"></div>
<div class="a" style="left:1145px;top:670px;width:1px;height:14px;background:#e4e2cf"></div>
<div class="a" style="left:1163px;top:670px;width:1px;height:14px;background:#e4e2cf"></div>
<div class="a" style="left:1278px;top:670px;width:1px;height:14px;background:#e4e2cf"></div>
<span class="t" style="left:1071.5px;top:669.5px;font-size:9.2px;letter-spacing:-0.639px;color:#b4b4a8">CAP</span>
<span class="t" style="left:1096px;top:669.5px;font-size:9.2px;letter-spacing:-0.651px;color:#3a3a3a">NUM</span>
<span class="t" style="left:1122.5px;top:669.5px;font-size:9.2px;letter-spacing:-0.812px;color:#b4b4a8">OVR</span>
<span class="t" style="left:1147.75px;top:669.5px;font-size:9.2px;letter-spacing:-0.340px;color:#3a3a3a">ru</span>
<svg class="a" style="left:1158px;top:675.5px" width="4" height="3" viewBox="0 0 4 3"><path d="M0 0h4L2 2.500z" fill="#222"/></svg>
<span class="t" style="left:1168.5px;top:669.5px;font-size:9.2px;letter-spacing:-0.189px;color:#5a5a5a">Стр: 15</span>
<span class="t" style="left:1225.25px;top:669.5px;font-size:9.2px;letter-spacing:-0.312px;color:#5a5a5a">Кол: 1</span>
<div class="a" style="left:0px;top:684px;width:1280px;height:36px;background:#1e1e20"></div>
<svg class="a" style="left:0;top:0" width="1280" height="720" viewBox="0 0 1280 720"><g transform="translate(466.500,692.500)"><rect x="0" y="0" width="8.300" height="8.300" rx=".8" fill="#58c8f4"/><rect x="9.300" y="0" width="8.300" height="8.300" rx=".8" fill="#4abcf0"/><rect x="0" y="9.300" width="8.300" height="8.300" rx=".8" fill="#38a8ec"/><rect x="9.300" y="9.300" width="8.300" height="8.300" rx=".8" fill="#2a98e4"/></g><circle cx="507.500" cy="700" r="6" fill="none" stroke="#f4f4f4" stroke-width="2"/><path d="M512 705l4.500 4.500" stroke="#f4f4f4" stroke-width="2.400" stroke-linecap="round"/><rect x="538" y="694" width="12.500" height="11" rx="1.500" fill="#f0f0f0"/><rect x="533.500" y="698.500" width="12.500" height="11" rx="1.500" fill="#8a8a8a" stroke="#1e1e20" stroke-width=".8"/><path d="M566 695h6.500l2 2h9.500v12.500h-18z" fill="#e8b830"/><rect x="566" y="698.500" width="18" height="11" rx="1" fill="#f8d860"/><rect x="570" y="703.500" width="10" height="6" fill="#3a8ad8"/><rect x="599" y="693" width="17" height="17" rx="4" fill="#2a2e3a" stroke="#4a4e5a" stroke-width=".8"/><circle cx="607.500" cy="698" r="2.200" fill="#e8c84a"/><circle cx="604" cy="704" r="2.200" fill="#4ac8a8"/><circle cx="611" cy="704" r="2.200" fill="#e85a7a"/><circle cx="640.500" cy="701.500" r="9" fill="#f8f8f8"/><path d="M636 696l4.500 6.500v5M645 696l-4.500 6.500" stroke="#e83a2a" stroke-width="2" fill="none"/><circle cx="673.500" cy="702.500" r="8.300" fill="#2a9ad8"/><path d="M669 702.500l9-4-1.500 8.500-3-2.500-1.500 1.500v-2.500z" fill="#f4f8fc"/><rect x="676" y="693" width="11" height="8" rx="2" fill="#8a8e94"/><text x="677.800" y="699.500" font-family="Liberation Sans,sans-serif" font-size="6" fill="#e8e8e8">66</text><path d="M702.500 702v-4a4 4 0 0 1 8 0v4" fill="none" stroke="#3a3a3a" stroke-width="2"/><rect x="700.500" y="701" width="4.500" height="9.500" rx="1" fill="#f0d020"/><rect x="708" y="701" width="4.500" height="9.500" rx="1" fill="#f0d020"/><circle cx="739" cy="702" r="8.300" fill="#2a2a2e" stroke="#d8d8d8" stroke-width="1.300"/><path d="M739 702l-3-6M739 702l6 2M739 702l-3 6" stroke="#d8d8d8" stroke-width="1.300"/><circle cx="747.500" cy="695" r="3.600" fill="#e81a2a"/><rect x="764" y="693" width="18" height="18" rx="1.500" fill="#14183a"/><circle cx="773" cy="700.500" r="5" fill="none" stroke="#f4f4f4" stroke-width="2"/><path d="M767.500 709c2-3 9-3 11 0z" fill="#f4f4f4"/><rect x="791" y="686.500" width="29.500" height="30" rx="4" fill="#2e2f33"/><circle cx="805.500" cy="701" r="8.800" fill="#f8dc28"/><text x="800" y="704.300" font-family="Liberation Sans,sans-serif" font-weight="bold" font-size="8.500" fill="#e02a1a" letter-spacing="-.5">1С</text><rect x="638.5" y="715" width="4" height="1.800" rx=".9" fill="#8a8a8e"/><rect x="672" y="715" width="4" height="1.800" rx=".9" fill="#8a8a8e"/><rect x="704.5" y="715" width="4" height="1.800" rx=".9" fill="#8a8a8e"/><rect x="737.5" y="715" width="4" height="1.800" rx=".9" fill="#8a8a8e"/><rect x="771" y="715" width="4" height="1.800" rx=".9" fill="#8a8a8e"/><rect x="800" y="715" width="11.500" height="1.800" rx=".9" fill="#c8c8c8"/><path d="M1101.500 704l4-4 4 4" fill="none" stroke="#f0f0f0" stroke-width="1.400"/><rect x="1127.500" y="695.500" width="4.500" height="8.500" rx="2.200" fill="none" stroke="#f0f0f0" stroke-width="1.200"/><path d="M1125.500 702.500a4.300 4.300 0 0 0 8.600 0M1129.800 707v2.500" fill="none" stroke="#f0f0f0" stroke-width="1.100"/><rect x="1181" y="696.500" width="10" height="8" rx="1" fill="none" stroke="#f0f0f0" stroke-width="1.300"/><path d="M1183.500 708h5M1186 704.500v3.500" stroke="#f0f0f0" stroke-width="1.200"/><rect x="1188.500" y="700.500" width="4" height="6" fill="#1e1e20" stroke="#f0f0f0" stroke-width="1"/><path d="M1198.500 700.500h2.500l3-3v9l-3-3h-2.500z" fill="none" stroke="#f0f0f0" stroke-width="1.100"/><path d="M1206 699.500a3.500 3.500 0 0 1 0 5M1208 697.500a6 6 0 0 1 0 9" fill="none" stroke="#f0f0f0" stroke-width="1"/></svg>
<span class="t" style="left:1149.5px;top:694.5px;font-size:8.6px;letter-spacing:-0.545px;color:#f4f4f4">ENG</span>
<span class="t" style="left:1245.5px;top:688.5px;font-size:8.8px;letter-spacing:-0.304px;color:#f4f4f4">19:44</span>
<span class="t" style="left:1224px;top:700.75px;font-size:8.8px;letter-spacing:-0.204px;color:#f4f4f4">10.02.2026</span>
<svg class="a" style="left:6px;top:554px" width="152" height="152" viewBox="6 554 152 152">
<defs>
<clipPath id="wc"><circle cx="82" cy="630" r="73.500"/></clipPath>
<radialGradient id="wbg" cx=".8" cy=".4" r=".85"><stop offset="0" stop-color="#c69a58"/><stop offset=".4" stop-color="#a67236"/><stop offset="1" stop-color="#6e4018"/></radialGradient>
<linearGradient id="wsk" x1="0" y1="0" x2="1" y2="1"><stop offset="0" stop-color="#f0d8cc"/><stop offset=".6" stop-color="#deb8aa"/><stop offset="1" stop-color="#c89c8c"/></linearGradient>
<linearGradient id="wnk" x1="0" y1="0" x2="0" y2="1"><stop offset="0" stop-color="#c49886"/><stop offset=".35" stop-color="#e2c2b4"/><stop offset="1" stop-color="#e8ccc0"/></linearGradient>
<linearGradient id="wsh" x1="0" y1="0" x2="1" y2="0"><stop offset="0" stop-color="#8c8a88"/><stop offset="1" stop-color="#bcb6b2"/></linearGradient>
<filter id="wbl" x="-10%" y="-10%" width="120%" height="120%"><feGaussianBlur stdDeviation="1"/></filter>
</defs>
<g clip-path="url(#wc)">
<rect x="6" y="554" width="152" height="152" fill="url(#wbg)"/>
<g filter="url(#wbl)">
<path d="M4 650C6 615 14 600 32 595C48 592 60 594 66 600L62 650L60 710H4z" fill="#0c0c0e"/>
<path d="M8 648C9 618 16 603 33 597" fill="none" stroke="#b4322a" stroke-width="2.400"/>
<path d="M104 660C116 648 132 650 150 664L160 710H96z" fill="#101014"/>
<path d="M61 646L58 694L74 708H101L105 672L102 654z" fill="url(#wnk)"/>
<path d="M57 618C56 602 72 594 92 594C110 594 118 604 119 622C122 632 122 640 117 650C114 662 106 668 96 666C80 663 64 652 60 636z" fill="url(#wsk)"/>
<ellipse cx="59" cy="632" rx="6.500" ry="11" fill="#e2b6aa"/>
<ellipse cx="59.500" cy="633" rx="3" ry="6.500" fill="#c08a80"/>
<path d="M53 614C52 600 61 591 80 588C98 585 110 587 114 594C115 600 111 601 105 599C96 597 88 598 82 600L70 605L60 613z" fill="#221813"/>
<path d="M59 613L70 605L81 600L83 615L62 621.500z" fill="url(#wsh)"/>
<path d="M88 611.500L104 609.500" stroke="#5a4034" stroke-width="1.600"/><path d="M112 613.500L122 616" stroke="#5a4034" stroke-width="1.400"/>
<path d="M61 621.500L87 615" stroke="#1c1c22" stroke-width="1.800"/>
<rect x="86.500" y="613" width="21.500" height="16.500" rx="3" fill="rgba(150,160,205,.5)" stroke="#222228" stroke-width="2"/>
<rect x="112.500" y="617.500" width="12" height="16.500" rx="3" fill="rgba(150,160,205,.45)" stroke="#2c2c34" stroke-width="1.700"/>
<path d="M108 620.500L112.500 622.500" stroke="#1c1c22" stroke-width="1.600"/>
<ellipse cx="117" cy="634" rx="2.500" ry="2" fill="#c89888"/>
<ellipse cx="107.500" cy="646" rx="6.500" ry="3.600" fill="#9a5458"/>
<ellipse cx="108" cy="646" rx="3.500" ry="1.500" fill="#5a2a30"/>
<ellipse cx="101" cy="661" rx="8" ry="3.200" fill="#947262"/>
<path d="M46 692L60 684L76 708H44z" fill="#1a1c22"/>
<path d="M96 700L104 672L112 690L110 710z" fill="#16181c"/>
</g>
</g>
</svg>
</div></body></html>
